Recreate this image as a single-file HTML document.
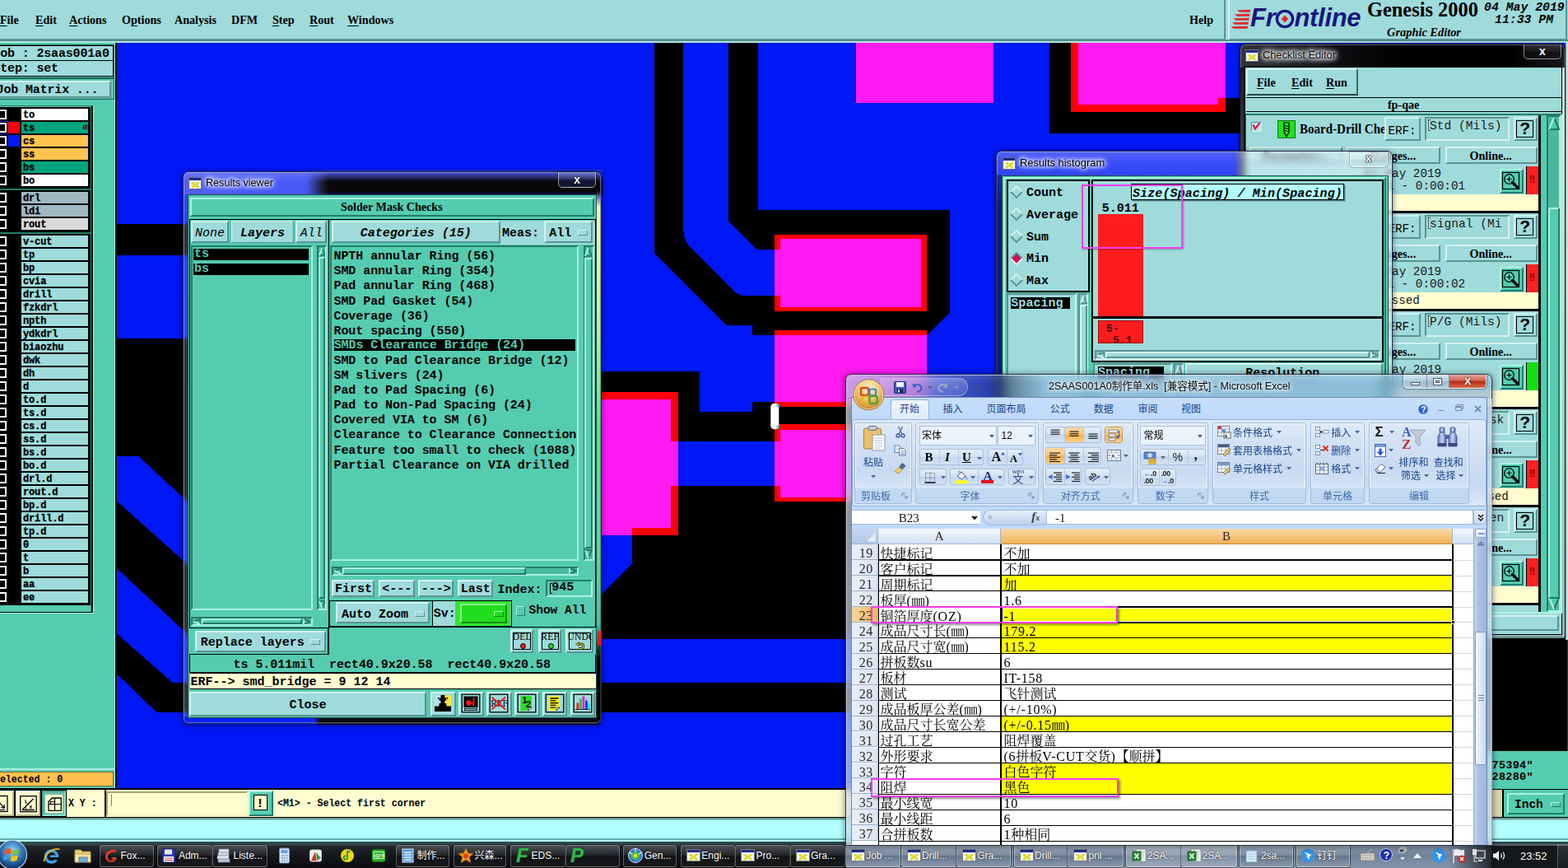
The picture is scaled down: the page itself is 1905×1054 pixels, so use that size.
<!DOCTYPE html>
<html lang="en"><head><meta charset="utf-8"><title>Genesis 2000 Graphic Editor</title>
<style>
html,body{margin:0;padding:0}
body{width:1905px;height:1054px;overflow:hidden;position:relative;background:#9fdbdb;font-family:"Liberation Sans",sans-serif}
div,span,svg{position:absolute;box-sizing:border-box}
span.i{position:static}
.m{font:bold 15px "Liberation Mono",monospace;white-space:pre;color:#000;line-height:1}
.mr{font:15px "Liberation Mono",monospace;white-space:pre;color:#000;line-height:1}
.mi{font:italic bold 15px "Liberation Mono",monospace;white-space:pre;color:#000;line-height:1}
.s{font:bold 16px "Liberation Serif",serif;white-space:pre;color:#000;line-height:1}
.a{font:12px "Liberation Sans","Noto Sans CJK SC",sans-serif;white-space:pre;color:#000;line-height:1}
.y{font:12px "Liberation Sans","Noto Sans CJK SC",sans-serif;white-space:pre;color:#15428b;line-height:1}
.c{font:16px "Liberation Serif","Noto Serif CJK SC",serif;white-space:pre;color:#000;line-height:1}
.up{border:2px solid;border-color:#d4f1f1 #5b9393 #5b9393 #d4f1f1;background:#9fdbdb}
.dn{border:2px solid;border-color:#5b9393 #d4f1f1 #d4f1f1 #5b9393;background:#9fdbdb}
.tup{border:2px solid;border-color:#aaf2e0 #237c66 #237c66 #aaf2e0;background:#55ccb0}
.tdn{border:2px solid;border-color:#237c66 #aaf2e0 #aaf2e0 #237c66;background:#55ccb0}
.sx{transform:scaleX(.91)}
.sl{transform:scaleX(.91);transform-origin:0 0}
.ctr{display:flex;align-items:center;justify-content:center}
.u{text-decoration:underline;text-underline-offset:2px;text-decoration-thickness:1px}
</style></head>
<body>
<svg style="left:0;top:0" width="1905" height="1054" viewBox="0 0 1905 1054" shape-rendering="crispEdges">
<clipPath id="cv"><rect x="141.5" y="52" width="1763" height="906"/></clipPath><g clip-path="url(#cv)">
<rect x="141" y="52" width="1764" height="906" fill="#0018f5"/><rect x="141" y="272" width="99" height="37.7" fill="#000"/><polygon points="141,410.8 728,410.8 728,450.6 700,450.6 700,620 141,620" fill="#000"/><polygon points="141,600 731,600 731,870 141,870" fill="#000"/><polygon points="141,554.2 168.4,554.2 300,676 300,750 141,607.6" fill="#0018f5"/><polygon points="141,689.4 234.6,776.4 1200,776.4 1200,829.3 210,829.3 141,768.6" fill="#0018f5"/><polygon points="141,768.6 210,829.3 1200,829.3 1200,864.7 190,864.7 141,817.3" fill="#000"/><polygon points="141,817.3 190,864.7 1200,864.7 1200,958 141,958" fill="#0018f5"/><polygon points="794.5,52 830,52 830,279 831.5,288 835,296 893,355 901,359 941,359 941,407.4 913.6,407.4 913.6,394.6 881.7,394.6 794.5,307" fill="#000"/><polygon points="884.5,52 921,52 921,254.8 1154,254.8 1154,379.5 1128,405.5 941,405.5 941,303 919,303 884.5,268.5" fill="#000"/><rect x="941" y="285" width="185" height="93" fill="#ff0000"/><rect x="947.7" y="290.4" width="171.7" height="82.8" fill="#ff19f3"/><rect x="941" y="303" width="7" height="56" fill="#ff19f3"/><polygon points="700,450.6 850,450.6 850,499.8 913.6,499.8 913.6,487.6 941,487.6 941,536 700,536" fill="#000"/><rect x="700" y="590" width="500" height="186.4" fill="#000"/><rect x="700" y="536" width="124" height="54" fill="#000"/><polygon points="700,650 768.3,650 768.3,684 724,728 700,728" fill="#0018f5"/><rect x="941" y="400.8" width="185" height="93.2" fill="#ff0000"/><rect x="941" y="407.4" width="185" height="81.0" fill="#ff19f3"/><rect x="913.6" y="494" width="286.4" height="21.4" fill="#000"/><rect x="941" y="515.4" width="185" height="93.1" fill="#ff0000"/><rect x="947.7" y="522" width="178.3" height="81.7" fill="#ff19f3"/><rect x="941" y="536" width="7" height="54" fill="#ff19f3"/><rect x="700" y="475.6" width="124" height="174.4" fill="#ff0000"/><rect x="700" y="484.8" width="115.4" height="155.9" fill="#ff19f3"/><rect x="815" y="536" width="9" height="54" fill="#ff19f3"/><rect x="700" y="640" width="68.3" height="10" fill="#ff19f3"/><rect x="1040" y="52" width="167" height="72.6" fill="#ff19f3"/><rect x="1275" y="52" width="245" height="109.5" fill="#000"/><rect x="1489" y="52" width="31" height="66.8" fill="#0018f5"/><rect x="1301" y="52" width="188" height="83.8" fill="#ff0000"/><rect x="1310" y="52" width="179" height="66.8" fill="#ff19f3"/><rect x="1310" y="118" width="170" height="9.3" fill="#ff19f3"/><rect x="1800" y="760" width="105" height="152" fill="#000"/><defs><linearGradient id="tbg" x1="0" y1="0" x2="0" y2="1"><stop offset="0" stop-color="#2030e8"/><stop offset="0.15" stop-color="#1a28c0"/><stop offset="0.42" stop-color="#000"/><stop offset="1" stop-color="#000"/></linearGradient><linearGradient id="tbh" x1="0" y1="0" x2="1" y2="0"><stop offset="0" stop-color="#0018f5"/><stop offset="1" stop-color="#0018f5" stop-opacity="0"/></linearGradient></defs><rect x="372" y="206" width="360" height="31" fill="url(#tbg)"/><rect x="370" y="206" width="24" height="31" fill="url(#tbh)"/><rect x="385" y="869" width="344" height="11" fill="#000"/></g>
<g shape-rendering="auto"><rect x="936.3" y="489.8" width="10" height="31.4" rx="4.5" fill="#fff"/><rect x="943.3" y="490.5" width="3" height="4" fill="#3fe0f0"/><rect x="943.3" y="516.5" width="3" height="4" fill="#3fe0f0"/></g>
</svg>
<div style="left:0px;top:0px;width:1905px;height:48px;background:#9fdbdb"></div>
<div style="left:0px;top:48px;width:1905px;height:2px;background:#4d8a8a"></div>
<div style="left:0px;top:50px;width:1905px;height:2px;background:#b4e6e0"></div>
<div style="left:-4px;top:-4px;width:1493px;height:53px;border:2px solid;border-color:#d4f1f1 #5b9393 #5b9393 #d4f1f1"></div>
<div style="left:1492px;top:-4px;width:411.5px;height:53px;border:2px solid;border-color:#d4f1f1 #5b9393 #5b9393 #d4f1f1"></div>
<div class="s" style="left:0px;top:15.5px;font-size:15.5px;transform:scaleX(0.91);transform-origin:0 0"><span class="i u">F</span>ile</div>
<div class="s" style="left:42.8px;top:15.5px;font-size:15.5px;transform:scaleX(0.91);transform-origin:0 0"><span class="i u">E</span>dit</div>
<div class="s" style="left:84px;top:15.5px;font-size:15.5px;transform:scaleX(0.91);transform-origin:0 0"><span class="i u">A</span>ctions</div>
<div class="s" style="left:147.5px;top:15.5px;font-size:15.5px;transform:scaleX(0.91);transform-origin:0 0">O<span class="i u">p</span>tions</div>
<div class="s" style="left:212px;top:15.5px;font-size:15.5px;transform:scaleX(0.91);transform-origin:0 0">Analysis</div>
<div class="s" style="left:281.4px;top:15.5px;font-size:15.5px;transform:scaleX(0.91);transform-origin:0 0">DFM</div>
<div class="s" style="left:331.2px;top:15.5px;font-size:15.5px;transform:scaleX(0.91);transform-origin:0 0"><span class="i u">S</span>tep</div>
<div class="s" style="left:376px;top:15.5px;font-size:15.5px;transform:scaleX(0.91);transform-origin:0 0"><span class="i u">R</span>out</div>
<div class="s" style="left:421.8px;top:15.5px;font-size:15.5px;transform:scaleX(0.91);transform-origin:0 0"><span class="i u">W</span>indows</div>
<div class="s" style="left:1444.9px;top:15.5px;font-size:15.5px;transform:scaleX(0.91);transform-origin:0 0">Help</div>
<svg style="left:1494px;top:8px" width="30" height="30" viewBox="0 0 30 30"><polygon points="9,4.3 25.0,3.7 25.0,6.7 12,6.7" fill="#e8252a"/><polygon points="6,9.3 24.2,8.7 24.2,11.7 9,11.7" fill="#e8252a"/><polygon points="4.5,14.3 23.4,13.7 23.4,16.7 7.5,16.7" fill="#e8252a"/><polygon points="3,19.3 22.6,18.7 22.6,21.7 6,21.7" fill="#e8252a"/><polygon points="1.5,24.3 21.8,23.7 21.8,26.7 4.5,26.7" fill="#e8252a"/></svg>
<div style="left:1519px;top:6px;font:italic bold 31px 'Liberation Sans',sans-serif;color:#17177f;letter-spacing:-0.3px;line-height:1;white-space:pre">Fr<span class="i" style="display:inline-block;width:23px;position:relative;color:transparent;letter-spacing:0">o<svg style="left:-2px;top:3px" width="28" height="28" viewBox="0 0 28 28"><circle cx="14" cy="14" r="9.6" fill="none" stroke="#17177f" stroke-width="3.4"/><polygon points="14,9.6 18.2,14 14,18.4 9.8,14" fill="#e8252a"/></svg></span>ntline</div>
<div class="s" style="left:1661px;top:0px;font-size:24.4px">Genesis 2000</div>
<div class="s" style="left:1685px;top:31.5px;font-size:14.4px;font-style:italic">Graphic Editor</div>
<div class="mi" style="left:1803px;top:2px;font-size:14.8px">04 May 2019</div>
<div class="mi" style="left:1816px;top:17px;font-size:14.8px">11:33 PM</div>
<div style="left:0px;top:52px;width:141px;height:906px;background:#55ccb0"></div>
<div style="left:138.5px;top:52px;width:1.7px;height:906px;background:#aaf0e0"></div>
<div style="left:140.2px;top:52px;width:1.4px;height:906px;background:#000"></div>
<div style="left:-5px;top:53.5px;width:144px;height:41.5px;border:1.5px solid #1d5d4f;background:#55ccb0"></div>
<div style="left:-5px;top:54.7px;width:142.5px;height:19.3px;border:1.5px solid #000;background:#9fdbdb;overflow:hidden"><div class="m" style="left:-4.6px;top:2px;letter-spacing:-0.17px">Job : 2saas001a0</div></div>
<div style="left:-5px;top:73px;width:142.5px;height:19.7px;border:1.5px solid #000;background:#9fdbdb;overflow:hidden"><div class="m" style="left:-4.6px;top:2px;letter-spacing:-0.17px">Step: set</div></div>
<div style="left:-5px;top:95.3px;width:144px;height:26.2px;border:1.5px solid #1d5d4f;background:#55ccb0"></div>
<div class="up" style="left:-5px;top:98.2px;width:140.4px;height:21.2px;overflow:hidden"><div class="m" style="left:-1.3px;top:2px;letter-spacing:-0.17px">Job Matrix ...</div></div>
<div style="left:-5px;top:127.5px;width:118.5px;height:617.5px;border:1.500px solid;border-color:#237c66 #aaf0e0 #aaf0e0 #237c66;background:#000"></div>
<div style="left:-5px;top:129px;width:116px;height:613.5px;background:#55ccb0"></div>
<div style="left:109.5px;top:129px;width:1.5px;height:613.5px;background:#3a9a84"></div>
<div style="left:0px;top:129.7px;width:109.5px;height:605.3px;background:#000"></div>
<div style="left:-3px;top:133px;width:11px;height:12px;background:#000;border:2px solid #fff"></div>
<div style="left:26px;top:132px;width:81.4px;height:14px;background:#fff;overflow:hidden"><div class="m" style="left:2px;top:1.5px;font-size:12px;letter-spacing:-0.15px;-webkit-text-stroke:.3px #000">to</div></div>
<div style="left:-3px;top:149px;width:11px;height:12px;background:#000;border:2px solid #fff"></div>
<div style="left:-3px;top:147px;width:12.5px;height:16px;border:1.5px solid #0018f5"></div>
<div style="left:10px;top:148px;width:14.3px;height:14px;background:#ff0000"></div>
<div style="left:26px;top:148px;width:81.4px;height:14px;background:#00a57e;overflow:hidden"><div class="m" style="left:2px;top:1.5px;font-size:12px;letter-spacing:-0.15px;-webkit-text-stroke:.3px #000">ts</div></div>
<div style="left:-3px;top:165px;width:11px;height:12px;background:#000;border:2px solid #fff"></div>
<div style="left:10px;top:164px;width:14.3px;height:14px;background:#0018f5"></div>
<div style="left:26px;top:164px;width:81.4px;height:14px;background:#ffc350;overflow:hidden"><div class="m" style="left:2px;top:1.5px;font-size:12px;letter-spacing:-0.15px;-webkit-text-stroke:.3px #000">cs</div></div>
<div style="left:-3px;top:181px;width:11px;height:12px;background:#000;border:2px solid #fff"></div>
<div style="left:26px;top:180px;width:81.4px;height:14px;background:#ffc350;overflow:hidden"><div class="m" style="left:2px;top:1.5px;font-size:12px;letter-spacing:-0.15px;-webkit-text-stroke:.3px #000">ss</div></div>
<div style="left:-3px;top:197px;width:11px;height:12px;background:#000;border:2px solid #fff"></div>
<div style="left:26px;top:196px;width:81.4px;height:14px;background:#00a57e;overflow:hidden"><div class="m" style="left:2px;top:1.5px;font-size:12px;letter-spacing:-0.15px;-webkit-text-stroke:.3px #000">bs</div></div>
<div style="left:-3px;top:213px;width:11px;height:12px;background:#000;border:2px solid #fff"></div>
<div style="left:26px;top:212px;width:81.4px;height:14px;background:#fff;overflow:hidden"><div class="m" style="left:2px;top:1.5px;font-size:12px;letter-spacing:-0.15px;-webkit-text-stroke:.3px #000">bo</div></div>
<div style="left:0px;top:228.5px;width:109.5px;height:2.0px;background:#237c66"></div>
<div style="left:-3px;top:234.2px;width:11px;height:12.0px;background:#000;border:2px solid #fff"></div>
<div style="left:26px;top:233.2px;width:81.4px;height:14.0px;background:#a0b8c2;overflow:hidden"><div class="m" style="left:2px;top:1.5px;font-size:12px;letter-spacing:-0.15px;-webkit-text-stroke:.3px #000">drl</div></div>
<div style="left:-3px;top:250.2px;width:11px;height:12.0px;background:#000;border:2px solid #fff"></div>
<div style="left:26px;top:249.2px;width:81.4px;height:14.0px;background:#a0b8c2;overflow:hidden"><div class="m" style="left:2px;top:1.5px;font-size:12px;letter-spacing:-0.15px;-webkit-text-stroke:.3px #000">ldi</div></div>
<div style="left:-3px;top:266.2px;width:11px;height:12.0px;background:#000;border:2px solid #fff"></div>
<div style="left:26px;top:265.2px;width:81.4px;height:14.0px;background:#d9d9d9;overflow:hidden"><div class="m" style="left:2px;top:1.5px;font-size:12px;letter-spacing:-0.15px;-webkit-text-stroke:.3px #000">rout</div></div>
<div style="left:0px;top:281.5px;width:109.5px;height:2.0px;background:#237c66"></div>
<div style="left:-3px;top:287.3px;width:11px;height:12.0px;background:#000;border:2px solid #fff"></div>
<div style="left:26px;top:286.3px;width:81.4px;height:14.0px;background:#9fdbdb;overflow:hidden"><div class="m" style="left:2px;top:1.5px;font-size:12px;letter-spacing:-0.15px;-webkit-text-stroke:.3px #000">v-cut</div></div>
<div style="left:-3px;top:303.3px;width:11px;height:12.0px;background:#000;border:2px solid #fff"></div>
<div style="left:26px;top:302.3px;width:81.4px;height:14.0px;background:#9fdbdb;overflow:hidden"><div class="m" style="left:2px;top:1.5px;font-size:12px;letter-spacing:-0.15px;-webkit-text-stroke:.3px #000">tp</div></div>
<div style="left:-3px;top:319.3px;width:11px;height:12.0px;background:#000;border:2px solid #fff"></div>
<div style="left:26px;top:318.3px;width:81.4px;height:14.0px;background:#9fdbdb;overflow:hidden"><div class="m" style="left:2px;top:1.5px;font-size:12px;letter-spacing:-0.15px;-webkit-text-stroke:.3px #000">bp</div></div>
<div style="left:-3px;top:335.3px;width:11px;height:12.0px;background:#000;border:2px solid #fff"></div>
<div style="left:26px;top:334.3px;width:81.4px;height:14.0px;background:#9fdbdb;overflow:hidden"><div class="m" style="left:2px;top:1.5px;font-size:12px;letter-spacing:-0.15px;-webkit-text-stroke:.3px #000">cvia</div></div>
<div style="left:-3px;top:351.3px;width:11px;height:12.0px;background:#000;border:2px solid #fff"></div>
<div style="left:26px;top:350.3px;width:81.4px;height:14.0px;background:#9fdbdb;overflow:hidden"><div class="m" style="left:2px;top:1.5px;font-size:12px;letter-spacing:-0.15px;-webkit-text-stroke:.3px #000">drill</div></div>
<div style="left:-3px;top:367.3px;width:11px;height:12.0px;background:#000;border:2px solid #fff"></div>
<div style="left:26px;top:366.3px;width:81.4px;height:14.0px;background:#9fdbdb;overflow:hidden"><div class="m" style="left:2px;top:1.5px;font-size:12px;letter-spacing:-0.15px;-webkit-text-stroke:.3px #000">fzkdrl</div></div>
<div style="left:-3px;top:383.3px;width:11px;height:12.0px;background:#000;border:2px solid #fff"></div>
<div style="left:26px;top:382.3px;width:81.4px;height:14.0px;background:#9fdbdb;overflow:hidden"><div class="m" style="left:2px;top:1.5px;font-size:12px;letter-spacing:-0.15px;-webkit-text-stroke:.3px #000">npth</div></div>
<div style="left:-3px;top:399.3px;width:11px;height:12.0px;background:#000;border:2px solid #fff"></div>
<div style="left:26px;top:398.3px;width:81.4px;height:14.0px;background:#9fdbdb;overflow:hidden"><div class="m" style="left:2px;top:1.5px;font-size:12px;letter-spacing:-0.15px;-webkit-text-stroke:.3px #000">ydkdrl</div></div>
<div style="left:-3px;top:415.3px;width:11px;height:12.0px;background:#000;border:2px solid #fff"></div>
<div style="left:26px;top:414.3px;width:81.4px;height:14.0px;background:#9fdbdb;overflow:hidden"><div class="m" style="left:2px;top:1.5px;font-size:12px;letter-spacing:-0.15px;-webkit-text-stroke:.3px #000">biaozhu</div></div>
<div style="left:-3px;top:431.3px;width:11px;height:12.0px;background:#000;border:2px solid #fff"></div>
<div style="left:26px;top:430.3px;width:81.4px;height:14.0px;background:#9fdbdb;overflow:hidden"><div class="m" style="left:2px;top:1.5px;font-size:12px;letter-spacing:-0.15px;-webkit-text-stroke:.3px #000">dwk</div></div>
<div style="left:-3px;top:447.3px;width:11px;height:12.0px;background:#000;border:2px solid #fff"></div>
<div style="left:26px;top:446.3px;width:81.4px;height:14.0px;background:#9fdbdb;overflow:hidden"><div class="m" style="left:2px;top:1.5px;font-size:12px;letter-spacing:-0.15px;-webkit-text-stroke:.3px #000">dh</div></div>
<div style="left:-3px;top:463.3px;width:11px;height:12.0px;background:#000;border:2px solid #fff"></div>
<div style="left:26px;top:462.3px;width:81.4px;height:14.0px;background:#9fdbdb;overflow:hidden"><div class="m" style="left:2px;top:1.5px;font-size:12px;letter-spacing:-0.15px;-webkit-text-stroke:.3px #000">d</div></div>
<div style="left:-3px;top:479.3px;width:11px;height:12.0px;background:#000;border:2px solid #fff"></div>
<div style="left:26px;top:478.3px;width:81.4px;height:14.0px;background:#9fdbdb;overflow:hidden"><div class="m" style="left:2px;top:1.5px;font-size:12px;letter-spacing:-0.15px;-webkit-text-stroke:.3px #000">to.d</div></div>
<div style="left:-3px;top:495.3px;width:11px;height:12.0px;background:#000;border:2px solid #fff"></div>
<div style="left:26px;top:494.3px;width:81.4px;height:14.0px;background:#9fdbdb;overflow:hidden"><div class="m" style="left:2px;top:1.5px;font-size:12px;letter-spacing:-0.15px;-webkit-text-stroke:.3px #000">ts.d</div></div>
<div style="left:-3px;top:511.3px;width:11px;height:12.0px;background:#000;border:2px solid #fff"></div>
<div style="left:26px;top:510.3px;width:81.4px;height:14.0px;background:#9fdbdb;overflow:hidden"><div class="m" style="left:2px;top:1.5px;font-size:12px;letter-spacing:-0.15px;-webkit-text-stroke:.3px #000">cs.d</div></div>
<div style="left:-3px;top:527.3px;width:11px;height:12.0px;background:#000;border:2px solid #fff"></div>
<div style="left:26px;top:526.3px;width:81.4px;height:14.0px;background:#9fdbdb;overflow:hidden"><div class="m" style="left:2px;top:1.5px;font-size:12px;letter-spacing:-0.15px;-webkit-text-stroke:.3px #000">ss.d</div></div>
<div style="left:-3px;top:543.3px;width:11px;height:12.0px;background:#000;border:2px solid #fff"></div>
<div style="left:26px;top:542.3px;width:81.4px;height:14.0px;background:#9fdbdb;overflow:hidden"><div class="m" style="left:2px;top:1.5px;font-size:12px;letter-spacing:-0.15px;-webkit-text-stroke:.3px #000">bs.d</div></div>
<div style="left:-3px;top:559.3px;width:11px;height:12.0px;background:#000;border:2px solid #fff"></div>
<div style="left:26px;top:558.3px;width:81.4px;height:14.0px;background:#9fdbdb;overflow:hidden"><div class="m" style="left:2px;top:1.5px;font-size:12px;letter-spacing:-0.15px;-webkit-text-stroke:.3px #000">bo.d</div></div>
<div style="left:-3px;top:575.3px;width:11px;height:12.0px;background:#000;border:2px solid #fff"></div>
<div style="left:26px;top:574.3px;width:81.4px;height:14.0px;background:#9fdbdb;overflow:hidden"><div class="m" style="left:2px;top:1.5px;font-size:12px;letter-spacing:-0.15px;-webkit-text-stroke:.3px #000">drl.d</div></div>
<div style="left:-3px;top:591.3px;width:11px;height:12.0px;background:#000;border:2px solid #fff"></div>
<div style="left:26px;top:590.3px;width:81.4px;height:14.0px;background:#9fdbdb;overflow:hidden"><div class="m" style="left:2px;top:1.5px;font-size:12px;letter-spacing:-0.15px;-webkit-text-stroke:.3px #000">rout.d</div></div>
<div style="left:-3px;top:607.3px;width:11px;height:12.0px;background:#000;border:2px solid #fff"></div>
<div style="left:26px;top:606.3px;width:81.4px;height:14.0px;background:#9fdbdb;overflow:hidden"><div class="m" style="left:2px;top:1.5px;font-size:12px;letter-spacing:-0.15px;-webkit-text-stroke:.3px #000">bp.d</div></div>
<div style="left:-3px;top:623.3px;width:11px;height:12.0px;background:#000;border:2px solid #fff"></div>
<div style="left:26px;top:622.3px;width:81.4px;height:14.0px;background:#9fdbdb;overflow:hidden"><div class="m" style="left:2px;top:1.5px;font-size:12px;letter-spacing:-0.15px;-webkit-text-stroke:.3px #000">drill.d</div></div>
<div style="left:-3px;top:639.3px;width:11px;height:12.0px;background:#000;border:2px solid #fff"></div>
<div style="left:26px;top:638.3px;width:81.4px;height:14.0px;background:#9fdbdb;overflow:hidden"><div class="m" style="left:2px;top:1.5px;font-size:12px;letter-spacing:-0.15px;-webkit-text-stroke:.3px #000">tp.d</div></div>
<div style="left:-3px;top:655.3px;width:11px;height:12.0px;background:#000;border:2px solid #fff"></div>
<div style="left:26px;top:654.3px;width:81.4px;height:14.0px;background:#9fdbdb;overflow:hidden"><div class="m" style="left:2px;top:1.5px;font-size:12px;letter-spacing:-0.15px;-webkit-text-stroke:.3px #000">0</div></div>
<div style="left:-3px;top:671.3px;width:11px;height:12.0px;background:#000;border:2px solid #fff"></div>
<div style="left:26px;top:670.3px;width:81.4px;height:14.0px;background:#9fdbdb;overflow:hidden"><div class="m" style="left:2px;top:1.5px;font-size:12px;letter-spacing:-0.15px;-webkit-text-stroke:.3px #000">t</div></div>
<div style="left:-3px;top:687.3px;width:11px;height:12.0px;background:#000;border:2px solid #fff"></div>
<div style="left:26px;top:686.3px;width:81.4px;height:14.0px;background:#9fdbdb;overflow:hidden"><div class="m" style="left:2px;top:1.5px;font-size:12px;letter-spacing:-0.15px;-webkit-text-stroke:.3px #000">b</div></div>
<div style="left:-3px;top:703.3px;width:11px;height:12.0px;background:#000;border:2px solid #fff"></div>
<div style="left:26px;top:702.3px;width:81.4px;height:14.0px;background:#9fdbdb;overflow:hidden"><div class="m" style="left:2px;top:1.5px;font-size:12px;letter-spacing:-0.15px;-webkit-text-stroke:.3px #000">aa</div></div>
<div style="left:-3px;top:719.3px;width:11px;height:12.0px;background:#000;border:2px solid #fff"></div>
<div style="left:26px;top:718.3px;width:81.4px;height:14.0px;background:#9fdbdb;overflow:hidden"><div class="m" style="left:2px;top:1.5px;font-size:12px;letter-spacing:-0.15px;-webkit-text-stroke:.3px #000">ee</div></div>
<div style="left:101px;top:152.3px;width:4.6px;height:4.7px;border:1px solid #000;background:#fff"><div style="left:0;top:1px;width:3px;height:1px;background:#000"></div><div style="left:1px;top:0;width:1px;height:3px;background:#000"></div></div>
<div style="left:-5px;top:933px;width:143.5px;height:24px;border-top:2px solid #aaf0e0;background:#55ccb0"></div>
<div style="left:-5px;top:937px;width:143px;height:18px;background:#ffc04c;border:1px solid #7a6a30;overflow:hidden"><div class="m" style="left:-3.4px;top:1.5px;font-size:13.4px;transform:scaleX(.863);transform-origin:0 0">Selected : 0</div></div>
<div style="left:0px;top:957px;width:1905px;height:2px;background:#000"></div>
<div style="left:0px;top:959px;width:1905px;height:33px;background:#fffccf"></div>
<div style="left:0px;top:991.5px;width:1905px;height:1.5px;background:#000"></div>
<div style="left:0px;top:993px;width:1905px;height:1.5px;background:#6a9c9c"></div>
<div style="left:0px;top:994.5px;width:1905px;height:1.5px;background:#8fd0c8"></div>
<div style="left:0px;top:996px;width:1905px;height:22px;background:#b2ffff"></div>
<div style="left:0px;top:1018px;width:1905px;height:2px;background:#5fb0a8"></div>
<div style="left:0px;top:1020px;width:1905px;height:2px;background:#b2ffff"></div>
<div style="left:0px;top:1022px;width:1905px;height:3px;background:#2a4a48"></div>
<div style="left:0px;top:959px;width:128.5px;height:33px;background:#000"></div>
<div style="left:-4px;top:960px;width:21px;height:31px;border:2px solid;border-color:#ffffee #b8b68a #b8b68a #ffffee;background:#fffccf;overflow:hidden"><svg style="left:-3px;top:3px" width="22" height="24" viewBox="0 0 22 24"><rect x="-2" y="1.500" width="16" height="19" fill="none" stroke="#000" stroke-width="1.300"/><path d="M1 6 L10 16 M10.500 16.500 L6 15.500 M10.500 16.500 L10 12 M0 18.500h11" stroke="#000" stroke-width="1.200" fill="none"/></svg></div>
<div style="left:19px;top:960px;width:30px;height:31px;border:2px solid;border-color:#ffffee #b8b68a #b8b68a #ffffee;background:#fffccf;overflow:hidden"><svg style="left:3px;top:3.500px" width="22" height="22" viewBox="0 0 22 22"><rect x="0.700" y="0.700" width="19.500" height="19" fill="none" stroke="#000" stroke-width="1.300"/><path d="M3 17.500 L16.500 4 M3 17.500 L18 17.500" stroke="#000" stroke-width="1.400" fill="none"/><path d="M7 5v4h2.500" stroke="#000" stroke-width="1" fill="none"/><path d="M8 17.500a6 6 0 0 0-1-3.500" stroke="#000" fill="none" stroke-width=".9"/><text x="11.500" y="16" font-size="6.500" font-weight="bold" font-family="Liberation Sans">x</text></svg></div>
<div style="left:51px;top:960px;width:28.5px;height:31px;background:#6dbfad;border:2px solid;border-color:#4fa391 #8fdccb #8fdccb #4fa391"><div style="left:2px;top:2.500px;width:20.500px;height:22px;background:#fffccf"><svg style="left:2.500px;top:3px" width="18" height="18" viewBox="0 0 18 18"><path d="M1 5.500L5.500 1H16.300V16.300H1z" fill="none" stroke="#000" stroke-width="1.300"/><path d="M8.500 1v15.300M1 8.500h15.300M3.500 8.500V5.500h5" stroke="#000" stroke-width="1.200" fill="none"/></svg></div></div>
<div style="left:80.5px;top:959px;width:46.5px;height:33px;background:#fffccf"></div>
<div class="m" style="left:83px;top:968.5px;font-size:13.4px;transform:scaleX(.863);transform-origin:0 0">X Y :</div>
<div style="left:127px;top:959px;width:1.5px;height:33px;background:#000"></div>
<div style="left:128.5px;top:961px;width:172.0px;height:29.5px;border:2.5px solid;border-color:#a8a578 #f6f3c0 #f6f3c0 #a8a578;background:#fffccf"><div style="left:4px;top:2px;width:1px;height:13px;border-left:1px dotted #000"></div></div>
<div style="left:302px;top:960px;width:29.5px;height:31px;border:2.5px solid;border-color:#aaf2e0 #237c66 #237c66 #aaf2e0;background:#55ccb0"><div style="left:3.5px;top:3px;width:17px;height:19px;border:1.3px solid #000;background:#fffacd" class="ctr"><b style="font:bold 15px 'Liberation Sans',sans-serif">!</b></div></div>
<div class="m" style="left:337px;top:969px;font-size:13.4px;transform:scaleX(.863);transform-origin:0 0">&lt;M1&gt; - Select first corner</div>
<div style="left:1795px;top:912px;width:110px;height:45.5px;background:#55ccb0"></div>
<div class="m" style="left:1812.5px;top:922.5px;font-size:13.5px;letter-spacing:0.3px">75394"</div>
<div class="m" style="left:1812.5px;top:937px;font-size:13.5px;letter-spacing:0.3px">28280"</div>
<div style="left:1795px;top:959px;width:30px;height:33px;background:#d8d4a8"></div>
<div style="left:1825px;top:959px;width:80px;height:33px;background:#55ccb0;border-left:2px solid #000"></div>
<div class="tup" style="left:1831px;top:963px;width:70px;height:26px;"><div class="m" style="left:7px;top:4.5px;font-size:14.5px">Inch</div><div style="left:51px;top:9px;width:12px;height:6px;border:1.5px solid;border-color:#aaf2e0 #237c66 #237c66 #aaf2e0"></div></div>
<div style="left:0px;top:1025px;width:1905px;height:29px;background:linear-gradient(#4a5058 0%,#23272d 8%,#14171b 50%,#0b0c0f 100%)"></div>
<div style="left:1028px;top:1025px;width:784px;height:29px;background:linear-gradient(#a9b7c9 0%,#8798ae 12%,#71839b 50%,#8495ab 100%)"></div>
<div style="left:1760px;top:1025px;width:145px;height:29px;background:linear-gradient(90deg,#14171b00,#14171bd0 50px,#14171b 58px)"></div>
<div style="left:1812px;top:1025px;width:93px;height:2px;background:#5a6068"></div>
<svg style="left:-6px;top:1016px" width="44" height="40" viewBox="0 0 44 40"><defs><radialGradient id="orb" cx="50%" cy="35%" r="65%"><stop offset="0" stop-color="#9fd4f5"/><stop offset="0.55" stop-color="#2f74b8"/><stop offset="1" stop-color="#0c2c5c"/></radialGradient></defs><circle cx="21" cy="22" r="17.5" fill="url(#orb)" stroke="#b8d4ea" stroke-width="1.2"/><path d="M12 16 q4-2.5 8-0.5 l-1.2 6 q-4-2-8 .5z" fill="#e8572a"/><path d="M21.5 15.8 q4 1.5 8-1 l-1.3 6.2 q-4 2.4-8 .8z" fill="#7fc241"/><path d="M10.5 23.5 q4-2.5 8-0.5 l-1.2 6 q-4-2-8 .5z" fill="#3a9ad9"/><path d="M19.8 23.2 q4 1.5 8-1 l-1.3 6.2 q-4 2.4-8 .8z" fill="#f9c513"/></svg>
<svg style="left:52px;top:1027px" width="22" height="24" viewBox="0 0 22 24"><circle cx="10.5" cy="13" r="7" fill="none" stroke="#3aa0ea" stroke-width="3.4"/><rect x="9" y="11.5" width="10" height="2.6" fill="#3aa0ea"/><rect x="13" y="14" width="7" height="3.2" fill="#14171b"/><path d="M1.5 19 C3 8 14 2 20.5 4.5" stroke="#f2b81e" stroke-width="1.8" fill="none"/></svg>
<svg style="left:90px;top:1028px" width="22" height="22" viewBox="0 0 22 22"><path d="M1 4h7l2 2h10v13H1z" fill="#e9cf78" stroke="#a88c30" stroke-width=".8"/><path d="M1 9h19v10H1z" fill="#f6e49c" stroke="#b49a3c" stroke-width=".8"/><rect x="6" y="13" width="10" height="6" fill="#6fb1e0" stroke="#3573a8" stroke-width=".8"/></svg>
<div style="left:121px;top:1025.5px;width:65.7px;height:27.5px;border:1px solid #ffffff50;border-radius:3px;background:linear-gradient(#ffffff2e,#ffffff10 45%,#00000018 50%,#ffffff0c);box-shadow:0 0 0 1px #00000080"></div>
<svg style="left:126px;top:1030px" width="18" height="18" viewBox="0 0 18 18"><path d="M14.5 2 C7 1 2 5 2 10 c0 4 3 7 7 7 c4 0 6.5-2.5 6.500-6 h-6 v2.500 h2.500 c-.5 1-1.500 1.500-3 1.500 c-2.500 0-4-2-4-4.500 c0-4 4-6.500 9.500-5.500z" fill="#e33a22"/></svg>
<div class="a" style="left:146.5px;top:1033px;font-size:12px;color:#fff;text-shadow:0 0 2px #000">Fox...</div>
<div style="left:191.4px;top:1025.5px;width:66.6px;height:27.5px;border:1px solid #ffffff50;border-radius:3px;background:linear-gradient(#ffffff2e,#ffffff10 45%,#00000018 50%,#ffffff0c);box-shadow:0 0 0 1px #00000080"></div>
<svg style="left:196px;top:1030px" width="18" height="18" viewBox="0 0 18 18"><rect x="1" y="1" width="16" height="16" rx="1.5" fill="#2e3cb0" stroke="#10186a"/><rect x="4" y="1.500" width="9" height="6" fill="#e8e8f4"/><rect x="3" y="10" width="12" height="6.500" fill="#fff"/><path d="M4 12h10M4 14.500h10" stroke="#d03030" stroke-width="1.200"/></svg>
<div class="a" style="left:216.9px;top:1033px;font-size:12px;color:#fff;text-shadow:0 0 2px #000">Adm...</div>
<div style="left:258px;top:1025.5px;width:66.5px;height:27.5px;border:1px solid #ffffff50;border-radius:3px;background:linear-gradient(#ffffff2e,#ffffff10 45%,#00000018 50%,#ffffff0c);box-shadow:0 0 0 1px #00000080"></div>
<svg style="left:263px;top:1030px" width="18" height="18" viewBox="0 0 18 18"><rect x="3" y="1" width="12" height="4" fill="#dfe6ee" stroke="#8492a6" stroke-width=".6"/><rect x="2" y="5" width="13" height="4" fill="#cfd8e4" stroke="#8492a6" stroke-width=".6"/><rect x="1" y="9" width="14" height="4" fill="#dfe6ee" stroke="#8492a6" stroke-width=".6"/><rect x="2" y="13" width="14" height="4" fill="#b8c4d4" stroke="#8492a6" stroke-width=".6"/></svg>
<div class="a" style="left:283.5px;top:1033px;font-size:12px;color:#fff;text-shadow:0 0 2px #000">Liste...</div>
<svg style="left:338px;top:1029px" width="16" height="20" viewBox="0 0 16 20"><rect x="1.500" y="1" width="12" height="18" rx="1.500" fill="#d4e4f8" stroke="#6d8fc0"/><rect x="3.500" y="3" width="8" height="4" fill="#6fa0dc"/><path d="M4 10h2M7 10h2M10 10h1.500M4 13h2M7 13h2M10 13h1.500M4 16h2M7 16h2M10 16h1.500" stroke="#7c96b8" stroke-width="1.500"/></svg>
<svg style="left:375px;top:1030px" width="18" height="18" viewBox="0 0 18 18"><rect x="1.500" y="2" width="14" height="14" rx="2" fill="#f2f2ee" stroke="#c9c9c0"/><path d="M3 15 L8 4 L9.500 15z" fill="#d8321e"/><path d="M9 5 L15 12 L10 15z" fill="#2f9a48"/></svg>
<svg style="left:413px;top:1030px" width="18" height="18" viewBox="0 0 18 18"><circle cx="9" cy="9" r="8" fill="#f2d41c"/><path d="M9 3 v8.500 a2.200 2.200 0 1 1 -1.500 -2.100" stroke="#1f9a48" stroke-width="1.800" fill="none"/><path d="M9 3 l3.500 1.800" stroke="#1f9a48" stroke-width="1.800"/></svg>
<svg style="left:451px;top:1030px" width="18" height="18" viewBox="0 0 18 18"><rect x="1" y="1.500" width="16" height="15" rx="2.500" fill="#27b020"/><rect x="3" y="4.500" width="12" height="8" fill="none" stroke="#d8ffd0" stroke-width=".9"/><text x="3.800" y="11.300" font-size="5.500" font-family="Liberation Sans" font-weight="bold" fill="#eaffea">iQIYI</text></svg>
<div style="left:481px;top:1025.5px;width:65px;height:27.5px;border:1px solid #ffffff50;border-radius:3px;background:linear-gradient(#ffffff2e,#ffffff10 45%,#00000018 50%,#ffffff0c);box-shadow:0 0 0 1px #00000080"></div>
<svg style="left:488px;top:1030px" width="16" height="18" viewBox="0 0 16 18"><rect x="1" y="1" width="13" height="16" fill="#4f97e6" stroke="#dbe9fa"/><path d="M3 5h9M3 8h9M3 11h9M3 14h9" stroke="#eaf3ff" stroke-width="1.400"/></svg>
<div class="a" style="left:506.5px;top:1033px;font-size:12px;color:#fff;text-shadow:0 0 2px #000">制作...</div>
<div style="left:551px;top:1025.5px;width:64px;height:27.5px;border:1px solid #ffffff50;border-radius:3px;background:linear-gradient(#ffffff2e,#ffffff10 45%,#00000018 50%,#ffffff0c);box-shadow:0 0 0 1px #00000080"></div>
<svg style="left:556px;top:1029px" width="20" height="20" viewBox="0 0 20 20"><polygon points="10,1 12.600,7 19,7.500 14.200,11.800 15.800,18.500 10,15 4.200,18.500 5.800,11.800 1,7.500 7.400,7" fill="#e8a01c" stroke="#b86c10" stroke-width=".8"/><circle cx="10" cy="10.500" r="3" fill="#e83c1c"/></svg>
<div class="a" style="left:576.5px;top:1033px;font-size:12px;color:#fff;text-shadow:0 0 2px #000">兴森...</div>
<div style="left:620px;top:1025.5px;width:66.7px;height:27.5px;border:1px solid #ffffff50;border-radius:3px;background:linear-gradient(#ffffff2e,#ffffff10 45%,#00000018 50%,#ffffff0c);box-shadow:0 0 0 1px #00000080"></div>
<div style="left:627px;top:1027px;font:italic bold 24px 'Liberation Sans',sans-serif;color:#2fb84c;line-height:1;text-shadow:0 0 1px #0a4a18">F</div>
<div class="a" style="left:645.5px;top:1033px;font-size:12px;color:#fff;text-shadow:0 0 2px #000">EDS...</div>
<div style="left:686.7px;top:1025.5px;width:66.2px;height:27.5px;border:1px solid #ffffff50;border-radius:3px;background:linear-gradient(#ffffff2e,#ffffff10 45%,#00000018 50%,#ffffff0c);box-shadow:0 0 0 1px #00000080"></div>
<div style="left:693px;top:1027px;font:italic bold 24px 'Liberation Sans',sans-serif;color:#2fb84c;line-height:1;text-shadow:0 0 1px #0a4a18">P</div>
<div class="a" style="left:712.2px;top:1033px;font-size:12px;color:#fff;text-shadow:0 0 2px #000"></div>
<div style="left:757.2px;top:1025.5px;width:64.5px;height:27.5px;border:1px solid #ffffff50;border-radius:3px;background:linear-gradient(#ffffff2e,#ffffff10 45%,#00000018 50%,#ffffff0c);box-shadow:0 0 0 1px #00000080"></div>
<svg style="left:762px;top:1029px" width="20" height="20" viewBox="0 0 20 20"><circle cx="10" cy="10" r="8.500" fill="#2f7fd0" stroke="#cfe2f6"/><circle cx="10" cy="10" r="5" fill="#48c040"/><circle cx="10" cy="10" r="2.200" fill="#f4e030"/><path d="M2 6l4 2M18 6l-4 2M10 1v4" stroke="#f0f6ff" stroke-width="1.200"/></svg>
<div class="a" style="left:782.7px;top:1033px;font-size:12px;color:#fff;text-shadow:0 0 2px #000">Gen...</div>
<div style="left:826.8px;top:1025.5px;width:66.2px;height:27.5px;border:1px solid #ffffff50;border-radius:3px;background:linear-gradient(#ffffff2e,#ffffff10 45%,#00000018 50%,#ffffff0c);box-shadow:0 0 0 1px #00000080"></div>
<svg style="left:833.8px;top:1031px" width="18" height="16" viewBox="0 0 18 16"><rect x="0.5" y="0.5" width="16" height="14" fill="#f4f4ee" stroke="#7a7a7a"/><rect x="1" y="1" width="15" height="3" fill="#1f2a8a"/><path d="M4 6.5 L13 13 M13 6.5 L4 13" stroke="#c8c800" stroke-width="2.2"/><path d="M4 6.5 L13 13 M13 6.5 L4 13" stroke="#f2f23a" stroke-width="1"/></svg>
<div class="a" style="left:852.3px;top:1033px;font-size:12px;color:#fff;text-shadow:0 0 2px #000">Engi...</div>
<div style="left:893px;top:1025.5px;width:66.5px;height:27.5px;border:1px solid #ffffff50;border-radius:3px;background:linear-gradient(#ffffff2e,#ffffff10 45%,#00000018 50%,#ffffff0c);box-shadow:0 0 0 1px #00000080"></div>
<svg style="left:900px;top:1031px" width="18" height="16" viewBox="0 0 18 16"><rect x="0.5" y="0.5" width="16" height="14" fill="#f4f4ee" stroke="#7a7a7a"/><rect x="1" y="1" width="15" height="3" fill="#1f2a8a"/><path d="M4 6.5 L13 13 M13 6.5 L4 13" stroke="#c8c800" stroke-width="2.2"/><path d="M4 6.5 L13 13 M13 6.5 L4 13" stroke="#f2f23a" stroke-width="1"/></svg>
<div class="a" style="left:918.5px;top:1033px;font-size:12px;color:#fff;text-shadow:0 0 2px #000">Pro...</div>
<div style="left:959.5px;top:1025.5px;width:67.2px;height:27.5px;border:1px solid #ffffff50;border-radius:3px;background:linear-gradient(#ffffff2e,#ffffff10 45%,#00000018 50%,#ffffff0c);box-shadow:0 0 0 1px #00000080"></div>
<svg style="left:966.5px;top:1031px" width="18" height="16" viewBox="0 0 18 16"><rect x="0.5" y="0.5" width="16" height="14" fill="#f4f4ee" stroke="#7a7a7a"/><rect x="1" y="1" width="15" height="3" fill="#1f2a8a"/><path d="M4 6.5 L13 13 M13 6.5 L4 13" stroke="#c8c800" stroke-width="2.2"/><path d="M4 6.5 L13 13 M13 6.5 L4 13" stroke="#f2f23a" stroke-width="1"/></svg>
<div class="a" style="left:985.0px;top:1033px;font-size:12px;color:#fff;text-shadow:0 0 2px #000">Gra...</div>
<div style="left:1026.7px;top:1025.5px;width:67.8px;height:27.5px;border:1px solid #ffffff70;border-radius:3px;background:linear-gradient(#ffffff2e,#ffffff10 45%,#00000018 50%,#ffffff0c);box-shadow:0 0 0 1px #00000080"></div>
<svg style="left:1033.7px;top:1031px" width="18" height="16" viewBox="0 0 18 16"><rect x="0.5" y="0.5" width="16" height="14" fill="#f4f4ee" stroke="#7a7a7a"/><rect x="1" y="1" width="15" height="3" fill="#1f2a8a"/><path d="M4 6.5 L13 13 M13 6.5 L4 13" stroke="#c8c800" stroke-width="2.2"/><path d="M4 6.5 L13 13 M13 6.5 L4 13" stroke="#f2f23a" stroke-width="1"/></svg>
<div class="a" style="left:1052.2px;top:1033px;font-size:12px;color:#fff;text-shadow:0 0 2px #000">Job ...</div>
<div style="left:1094.5px;top:1025.5px;width:67.2px;height:27.5px;border:1px solid #ffffff70;border-radius:3px;background:linear-gradient(#ffffff2e,#ffffff10 45%,#00000018 50%,#ffffff0c);box-shadow:0 0 0 1px #00000080"></div>
<svg style="left:1101.5px;top:1031px" width="18" height="16" viewBox="0 0 18 16"><rect x="0.5" y="0.5" width="16" height="14" fill="#f4f4ee" stroke="#7a7a7a"/><rect x="1" y="1" width="15" height="3" fill="#1f2a8a"/><path d="M4 6.5 L13 13 M13 6.5 L4 13" stroke="#c8c800" stroke-width="2.2"/><path d="M4 6.5 L13 13 M13 6.5 L4 13" stroke="#f2f23a" stroke-width="1"/></svg>
<div class="a" style="left:1120.0px;top:1033px;font-size:12px;color:#fff;text-shadow:0 0 2px #000">Drill...</div>
<div style="left:1161.7px;top:1025.5px;width:66.3px;height:27.5px;border:1px solid #ffffff70;border-radius:3px;background:linear-gradient(#ffffff2e,#ffffff10 45%,#00000018 50%,#ffffff0c);box-shadow:0 0 0 1px #00000080"></div>
<svg style="left:1168.7px;top:1031px" width="18" height="16" viewBox="0 0 18 16"><rect x="0.5" y="0.5" width="16" height="14" fill="#f4f4ee" stroke="#7a7a7a"/><rect x="1" y="1" width="15" height="3" fill="#1f2a8a"/><path d="M4 6.5 L13 13 M13 6.5 L4 13" stroke="#c8c800" stroke-width="2.2"/><path d="M4 6.5 L13 13 M13 6.5 L4 13" stroke="#f2f23a" stroke-width="1"/></svg>
<div class="a" style="left:1187.2px;top:1033px;font-size:12px;color:#fff;text-shadow:0 0 2px #000">Gra...</div>
<div style="left:1231.5px;top:1025.5px;width:65.5px;height:27.5px;border:1px solid #ffffff70;border-radius:3px;background:linear-gradient(#ffffff2e,#ffffff10 45%,#00000018 50%,#ffffff0c);box-shadow:0 0 0 1px #00000080"></div>
<svg style="left:1238.5px;top:1031px" width="18" height="16" viewBox="0 0 18 16"><rect x="0.5" y="0.5" width="16" height="14" fill="#f4f4ee" stroke="#7a7a7a"/><rect x="1" y="1" width="15" height="3" fill="#1f2a8a"/><path d="M4 6.5 L13 13 M13 6.5 L4 13" stroke="#c8c800" stroke-width="2.2"/><path d="M4 6.5 L13 13 M13 6.5 L4 13" stroke="#f2f23a" stroke-width="1"/></svg>
<div class="a" style="left:1257.0px;top:1033px;font-size:12px;color:#fff;text-shadow:0 0 2px #000">Drill...</div>
<div style="left:1297px;top:1025.5px;width:67.7px;height:27.5px;border:1px solid #ffffff70;border-radius:3px;background:linear-gradient(#ffffff2e,#ffffff10 45%,#00000018 50%,#ffffff0c);box-shadow:0 0 0 1px #00000080"></div>
<svg style="left:1304px;top:1031px" width="18" height="16" viewBox="0 0 18 16"><rect x="0.5" y="0.5" width="16" height="14" fill="#f4f4ee" stroke="#7a7a7a"/><rect x="1" y="1" width="15" height="3" fill="#1f2a8a"/><path d="M4 6.5 L13 13 M13 6.5 L4 13" stroke="#c8c800" stroke-width="2.2"/><path d="M4 6.5 L13 13 M13 6.5 L4 13" stroke="#f2f23a" stroke-width="1"/></svg>
<div class="a" style="left:1322.5px;top:1033px;font-size:12px;color:#fff;text-shadow:0 0 2px #000">pnl ...</div>
<div style="left:1368.4px;top:1025.5px;width:66.6px;height:27.5px;border:1px solid #ffffff70;border-radius:3px;background:linear-gradient(#ffffff66,#ffffff3a 45%,#ffffff22 50%,#ffffff30);box-shadow:0 0 0 1px #00000080"></div>
<svg style="left:1375px;top:1030px" width="18" height="18" viewBox="0 0 18 18"><rect x="5" y="1" width="12" height="15" fill="#f4f8f4" stroke="#8aa08a" stroke-width=".8"/><path d="M7 5h8M7 8h8M7 11h8" stroke="#9ab89a"/><rect x="1" y="4" width="10" height="11" fill="#2a8a3c" stroke="#145a20" stroke-width=".8"/><path d="M3.500 6.500l5 6M8.500 6.500l-5 6" stroke="#fff" stroke-width="1.500"/></svg>
<div class="a" style="left:1393.9px;top:1033px;font-size:12px;color:#fff;text-shadow:0 0 2px #000">2SA...</div>
<div style="left:1435px;top:1025.5px;width:67.7px;height:27.5px;border:1px solid #ffffff70;border-radius:3px;background:linear-gradient(#ffffff66,#ffffff3a 45%,#ffffff22 50%,#ffffff30);box-shadow:0 0 0 1px #00000080"></div>
<svg style="left:1442px;top:1030px" width="18" height="18" viewBox="0 0 18 18"><rect x="5" y="1" width="12" height="15" fill="#f4f8f4" stroke="#8aa08a" stroke-width=".8"/><path d="M7 5h8M7 8h8M7 11h8" stroke="#9ab89a"/><rect x="1" y="4" width="10" height="11" fill="#2a8a3c" stroke="#145a20" stroke-width=".8"/><path d="M3.500 6.500l5 6M8.500 6.500l-5 6" stroke="#fff" stroke-width="1.500"/></svg>
<div class="a" style="left:1460.5px;top:1033px;font-size:12px;color:#fff;text-shadow:0 0 2px #000">2SA...</div>
<div style="left:1506.4px;top:1025.5px;width:64.8px;height:27.5px;border:1px solid #ffffff70;border-radius:3px;background:linear-gradient(#ffffff2e,#ffffff10 45%,#00000018 50%,#ffffff0c);box-shadow:0 0 0 1px #00000080"></div>
<svg style="left:1513px;top:1030px" width="16" height="18" viewBox="0 0 16 18"><rect x="1" y="2" width="13" height="15" fill="#d4ecf8" stroke="#6f9ab8" stroke-width=".8"/><path d="M3 1v3M6 1v3M9 1v3M12 1v3" stroke="#6f8aa0"/><path d="M3 7h9M3 10h9M3 13h9" stroke="#9cc0d8" stroke-width=".8"/></svg>
<div class="a" style="left:1531.9px;top:1033px;font-size:12px;color:#fff;text-shadow:0 0 2px #000">2sa...</div>
<div style="left:1574.5px;top:1025.5px;width:65.9px;height:27.5px;border:1px solid #ffffff70;border-radius:3px;background:linear-gradient(#ffffff2e,#ffffff10 45%,#00000018 50%,#ffffff0c);box-shadow:0 0 0 1px #00000080"></div>
<svg style="left:1580px;top:1030px" width="18" height="18" viewBox="0 0 18 18"><circle cx="9" cy="9" r="8.500" fill="#2f94ea"/><path d="M4.500 4.500 l9 3.500 l-3 2 l1 1 l-2.500 3.500 l.3-3 l-2.500-1.500 l2-.7z" fill="#fff"/></svg>
<div class="a" style="left:1600.0px;top:1033px;font-size:12px;color:#fff;text-shadow:0 0 2px #000">钉钉</div>
<svg style="left:1652px;top:1031px" width="20" height="16" viewBox="0 0 20 16"><rect x="1" y="5" width="17" height="9" rx="1" fill="#d8d4cc" stroke="#8a857a"/><path d="M3 8h13M3 11h13" stroke="#8a857a" stroke-dasharray="2 1"/><path d="M10 5 q0-4 5-4" stroke="#c8c4bc" fill="none"/></svg>
<svg style="left:1676px;top:1030px" width="16" height="16" viewBox="0 0 16 16"><circle cx="8" cy="8" r="7.500" fill="#1c2fb0" stroke="#c8d4f4"/><text x="4.800" y="12.500" font-size="12" font-weight="bold" font-family="Liberation Sans" fill="#fff">?</text></svg>
<svg style="left:1699px;top:1028px" width="12" height="20" viewBox="0 0 12 20"><rect x="3" y="1" width="6" height="4" fill="none" stroke="#e8e8e8"/><rect x="1" y="3" width="6" height="4" fill="#3a4048" stroke="#e8e8e8"/><polygon points="2,13 8,13 5,16.500" fill="#e8e8e8"/></svg>
<svg style="left:1716px;top:1035px" width="12" height="8" viewBox="0 0 12 8"><polygon points="6,1 11,7 1,7" fill="#f0f0f0"/></svg>
<svg style="left:1739px;top:1030px" width="18" height="18" viewBox="0 0 18 18"><circle cx="9" cy="9" r="8.500" fill="#2f94ea"/><path d="M4.500 4.500 l9 3.500 l-3 2 l1 1 l-2.500 3.500 l.3-3 l-2.500-1.500 l2-.7z" fill="#fff"/></svg>
<svg style="left:1764px;top:1029px" width="18" height="20" viewBox="0 0 18 20"><path d="M2 2v17" stroke="#e8e8e8" stroke-width="1.500"/><path d="M3 2.500 q3-1.500 6 0 t6 0 v8 q-3 1.500-6 0 t-6 0z" fill="#f4f4f4"/><circle cx="12" cy="14" r="4.500" fill="#d8281c"/><path d="M10 12l4 4M14 12l-4 4" stroke="#fff" stroke-width="1.400"/></svg>
<svg style="left:1788px;top:1030px" width="18" height="18" viewBox="0 0 18 18"><rect x="5" y="3" width="11" height="9" fill="#3a4450" stroke="#e8e8e8" stroke-width="1.200"/><rect x="8" y="14" width="5" height="2" fill="#e8e8e8"/><rect x="1" y="1" width="5" height="7" fill="#e8e8e8"/><path d="M3 8v8h4" stroke="#e8e8e8" fill="none"/></svg>
<svg style="left:1813px;top:1030px" width="18" height="18" viewBox="0 0 18 18"><polygon points="1,6.500 4,6.500 8,3 8,15 4,11.500 1,11.500" fill="#f0f0f0"/><path d="M10.500 6.500 q2 2.500 0 5 M12.800 4.500 q3.500 4.500 0 9" stroke="#f0f0f0" fill="none" stroke-width="1.200"/></svg>
<div class="a" style="left:1847px;top:1032.5px;font-size:13px;color:#fff">23:52</div>
<div style="left:1892px;top:1025px;width:13px;height:29px;border-left:1px solid #ffffff40;background:linear-gradient(#ffffff20,#ffffff05)"></div>
<div style="left:1506.4px;top:53.4px;width:395.6px;height:722.6px;border-radius:7px 7px 6px 6px;border:1px solid #101018;box-shadow:0 0 0 1px #ffffff50 inset,0 1px 5px 1px #00000066;background:linear-gradient(90deg,#30343c 0,#0c0d10 120px,#000 200px,#000 330px,#181a20 100%)"></div>
<div style="left:1507.4px;top:82px;width:4.6px;height:693px;background:linear-gradient(#1a1c22,#586870 30%,#8ab8b0 60%,#7fa8a8)"></div>
<div style="left:1897.5px;top:82px;width:3.5px;height:693px;background:linear-gradient(#d8e8e0,#a8d8c8 50%,#90b8b0)"></div>
<div style="left:1507.4px;top:770.5px;width:393.6px;height:4.5px;background:linear-gradient(#a8c8c8,#587878)"></div>
<div style="left:1902px;top:52px;width:3px;height:725px;background:linear-gradient(90deg,#90a8a8,#e8f4f4)"></div>
<svg style="left:1513px;top:59.5px" width="16" height="15" viewBox="0 0 16 15"><rect x="0.5" y="0.5" width="15" height="14" fill="#f6f6f0" stroke="#6a6a6a"/><rect x="1" y="1" width="14" height="3" fill="#1f2a8a"/><path d="M4 6.500 L12.500 12.500 M12.500 6.500 L4 12.500" stroke="#b8b800" stroke-width="2.400"/><path d="M4 6.500 L12.500 12.500 M12.500 6.500 L4 12.500" stroke="#f4f43a" stroke-width="1.100"/></svg>
<div class="a" style="left:1534px;top:60.500px;font-size:12.800px;color:#101010;text-shadow:0 0 4px #fff,0 0 5px #fff,0 0 7px #fff,0 0 9px #fff,0 0 12px #fff">Checklist Editor</div>
<div style="left:1851px;top:53.9px;width:46px;height:18.6px;border:1px solid #ffffff80;border-top:none;border-radius:0 0 5px 5px;background:linear-gradient(#70707860,#30303860 50%,#08080c60 52%,#20202860);box-shadow:0 0 0 1px #00000070"><div style="left:0;top:-1px;width:100%;height:100%;font:bold 14px 'Liberation Sans',sans-serif;color:#fff;text-shadow:0 0 2px #000" class="ctr">x</div></div>
<div style="left:1511px;top:80px;width:387px;height:691px;background:#9fdbdb;border:2px solid #000;border-right-width:1px;border-bottom-width:1px"></div>
<div class="up" style="left:1513.7px;top:83px;width:136.6px;height:33px;border-width:2.500px;border-right-color:#3a6a6a;border-bottom-color:#2a4a4a"><div class="s sl" style="left:11px;top:6.500px;font-size:15.500px"><span class="i u">F</span>ile</div><div class="s sl" style="left:53px;top:6.500px;font-size:15.500px"><span class="i u">E</span>dit</div><div class="s sl" style="left:95px;top:6.500px;font-size:15.500px"><span class="i u">R</span>un</div></div>
<div class="ctr" style="left:1513.7px;top:117.9px;width:383.3px;height:18.6px;border-top:1.500px solid #000;border-bottom:1.500px solid #000"><div class="s sx" style="font-size:15.500px;position:static">fp-qae</div></div>
<div style="left:1512.5px;top:137.5px;width:385.0px;height:607.5px;background:#55ccb0;border:2px solid;border-color:#237c66 #aaf2e0 #aaf2e0 #237c66"></div>
<div style="left:1869.4px;top:140px;width:2.6px;height:603px;background:#000"></div>
<div style="left:1514px;top:140px;width:355.4px;height:116.5px;background:#9fdbdb"></div>
<div style="left:1514px;top:256.3px;width:355.4px;height:2.7px;background:#000"></div>
<div class="up" style="left:1682px;top:142px;width:44px;height:29px;"><div class="mr" style="left:2.500px;top:8px;font-size:14.200px">ERF:</div></div>
<div class="dn" style="left:1730.5px;top:142px;width:103.1px;height:29px;overflow:hidden"><div style="left:2px;top:1px;width:3px;height:14px;border-left:1px dotted #000;border-top:1px dotted #000;border-bottom:1px dotted #000"></div><div class="mr" style="left:4.5px;top:1.500px;font-size:14.600px;color:#1a1a1a">Std (Mils)</div></div>
<div class="up" style="left:1838.6px;top:142px;width:29.2px;height:29px;border-width:2.500px"><div style="left:1.500px;top:1.500px;width:21px;height:21px;border:1.300px solid #000" class="ctr"><b style="font:bold 21px 'Liberation Sans',sans-serif;position:static">?</b></div></div>
<div class="up ctr" style="left:1518px;top:177.5px;width:113px;height:21.8px;"><div class="s sx" style="font-size:15.500px;position:static">Parameters...</div></div>
<div class="up ctr" style="left:1634.8px;top:177.5px;width:115.7px;height:21.8px;"><div class="s sx" style="font-size:15.500px;position:static">Ranges...</div></div>
<div class="up ctr" style="left:1755.5px;top:177.5px;width:112.3px;height:21.8px;"><div class="s sx" style="font-size:15.500px;position:static">Online...</div></div>
<div class="mr" style="left:1656.800px;top:203.5px;font-size:14.300px;color:#1a1a1a">04 May 2019</div>
<div class="mr" style="left:1650.700px;top:218.5px;font-size:14.400px;color:#1a1a1a">23:31 - 0:00:01</div>
<div class="tup" style="left:1821.5px;top:205px;width:29.2px;height:29.5px;border-width:2.500px"><svg style="left:0.500px;top:0.500px" width="24" height="24" viewBox="0 0 24 24"><rect x="1.500" y="1.500" width="20" height="20" fill="none" stroke="#000" stroke-width="1.200"/><circle cx="9.500" cy="9.500" r="5.800" fill="none" stroke="#000" stroke-width="1.300"/><path d="M6.500 9.500h6M9.500 6.500v6" stroke="#000" stroke-width="1.200"/><path d="M13.500 13.500L20 20" stroke="#000" stroke-width="3.400" stroke-linecap="round"/></svg></div>
<div style="left:1853.7px;top:202px;width:15.7px;height:34px;background:#ff2020;border-left:1px solid #000"><div style="left:3px;top:9px;font:bold 13px 'Liberation Sans',sans-serif;color:#8a0000;letter-spacing:-1px;line-height:1">!!</div></div>
<div style="left:1514px;top:236.3px;width:355.4px;height:20.0px;background:#fffccf;overflow:hidden"><div class="mr" style="left:159.4px;top:3px;font-size:14.300px;color:#1a1a1a"></div></div>
<div style="left:1514px;top:259px;width:355.4px;height:116.5px;background:#9fdbdb"></div>
<div style="left:1514px;top:375.3px;width:355.4px;height:2.7px;background:#000"></div>
<div class="up" style="left:1682px;top:261px;width:44px;height:29px;"><div class="mr" style="left:2.500px;top:8px;font-size:14.200px">ERF:</div></div>
<div class="dn" style="left:1730.5px;top:261px;width:103.1px;height:29px;overflow:hidden"><div style="left:2px;top:1px;width:3px;height:14px;border-left:1px dotted #000;border-top:1px dotted #000;border-bottom:1px dotted #000"></div><div class="mr" style="left:4.5px;top:1.500px;font-size:14.600px;color:#1a1a1a">signal (Mi</div></div>
<div class="up" style="left:1838.6px;top:261px;width:29.2px;height:29px;border-width:2.500px"><div style="left:1.500px;top:1.500px;width:21px;height:21px;border:1.300px solid #000" class="ctr"><b style="font:bold 21px 'Liberation Sans',sans-serif;position:static">?</b></div></div>
<div class="up ctr" style="left:1518px;top:296.5px;width:113px;height:21.8px;"><div class="s sx" style="font-size:15.500px;position:static">Parameters...</div></div>
<div class="up ctr" style="left:1634.8px;top:296.5px;width:115.7px;height:21.8px;"><div class="s sx" style="font-size:15.500px;position:static">Ranges...</div></div>
<div class="up ctr" style="left:1755.5px;top:296.5px;width:112.3px;height:21.8px;"><div class="s sx" style="font-size:15.500px;position:static">Online...</div></div>
<div class="mr" style="left:1656.800px;top:322.5px;font-size:14.300px;color:#1a1a1a">04 May 2019</div>
<div class="mr" style="left:1650.700px;top:337.5px;font-size:14.400px;color:#1a1a1a">23:31 - 0:00:02</div>
<div class="tup" style="left:1821.5px;top:324px;width:29.2px;height:29.5px;border-width:2.500px"><svg style="left:0.500px;top:0.500px" width="24" height="24" viewBox="0 0 24 24"><rect x="1.500" y="1.500" width="20" height="20" fill="none" stroke="#000" stroke-width="1.200"/><circle cx="9.500" cy="9.500" r="5.800" fill="none" stroke="#000" stroke-width="1.300"/><path d="M6.500 9.500h6M9.500 6.500v6" stroke="#000" stroke-width="1.200"/><path d="M13.500 13.500L20 20" stroke="#000" stroke-width="3.400" stroke-linecap="round"/></svg></div>
<div style="left:1853.7px;top:321px;width:15.7px;height:34px;background:#ff2020;border-left:1px solid #000"><div style="left:3px;top:9px;font:bold 13px 'Liberation Sans',sans-serif;color:#8a0000;letter-spacing:-1px;line-height:1">!!</div></div>
<div style="left:1514px;top:355.3px;width:355.4px;height:20.0px;background:#fffccf;overflow:hidden"><div class="mr" style="left:159.4px;top:3px;font-size:14.300px;color:#1a1a1a">Passed</div></div>
<div style="left:1514px;top:378px;width:355.4px;height:116.5px;background:#9fdbdb"></div>
<div style="left:1514px;top:494.3px;width:355.4px;height:2.7px;background:#000"></div>
<div class="up" style="left:1682px;top:380px;width:44px;height:29px;"><div class="mr" style="left:2.500px;top:8px;font-size:14.200px">ERF:</div></div>
<div class="dn" style="left:1730.5px;top:380px;width:103.1px;height:29px;overflow:hidden"><div style="left:2px;top:1px;width:3px;height:14px;border-left:1px dotted #000;border-top:1px dotted #000;border-bottom:1px dotted #000"></div><div class="mr" style="left:4.5px;top:1.500px;font-size:14.600px;color:#1a1a1a">P/G (Mils)</div></div>
<div class="up" style="left:1838.6px;top:380px;width:29.2px;height:29px;border-width:2.500px"><div style="left:1.500px;top:1.500px;width:21px;height:21px;border:1.300px solid #000" class="ctr"><b style="font:bold 21px 'Liberation Sans',sans-serif;position:static">?</b></div></div>
<div class="up ctr" style="left:1518px;top:415.5px;width:113px;height:21.8px;"><div class="s sx" style="font-size:15.500px;position:static">Parameters...</div></div>
<div class="up ctr" style="left:1634.8px;top:415.5px;width:115.7px;height:21.8px;"><div class="s sx" style="font-size:15.500px;position:static">Ranges...</div></div>
<div class="up ctr" style="left:1755.5px;top:415.5px;width:112.3px;height:21.8px;"><div class="s sx" style="font-size:15.500px;position:static">Online...</div></div>
<div class="mr" style="left:1656.800px;top:441.5px;font-size:14.300px;color:#1a1a1a">04 May 2019</div>
<div class="mr" style="left:1650.700px;top:456.5px;font-size:14.400px;color:#1a1a1a">23:31 - 0:00:03</div>
<div class="tup" style="left:1821.5px;top:443px;width:29.2px;height:29.5px;border-width:2.500px"><svg style="left:0.500px;top:0.500px" width="24" height="24" viewBox="0 0 24 24"><rect x="1.500" y="1.500" width="20" height="20" fill="none" stroke="#000" stroke-width="1.200"/><circle cx="9.500" cy="9.500" r="5.800" fill="none" stroke="#000" stroke-width="1.300"/><path d="M6.500 9.500h6M9.500 6.500v6" stroke="#000" stroke-width="1.200"/><path d="M13.500 13.500L20 20" stroke="#000" stroke-width="3.400" stroke-linecap="round"/></svg></div>
<div style="left:1853.7px;top:440px;width:15.7px;height:34px;background:#10e010;border-left:1px solid #000"></div>
<div style="left:1514px;top:474.3px;width:355.4px;height:20.0px;background:#fffccf;overflow:hidden"><div class="mr" style="left:159.4px;top:3px;font-size:14.300px;color:#1a1a1a"></div></div>
<div style="left:1514px;top:497px;width:355.4px;height:116.5px;background:#9fdbdb"></div>
<div style="left:1514px;top:613.3px;width:355.4px;height:2.7px;background:#000"></div>
<div class="up" style="left:1682px;top:499px;width:44px;height:29px;"><div class="mr" style="left:2.500px;top:8px;font-size:14.200px">ERF:</div></div>
<div class="dn" style="left:1730.5px;top:499px;width:103.1px;height:29px;overflow:hidden"><div style="left:2px;top:1px;width:3px;height:14px;border-left:1px dotted #000;border-top:1px dotted #000;border-bottom:1px dotted #000"></div><div class="mr" style="left:-1.5px;top:1.500px;font-size:14.600px;color:#1a1a1a">Solder Mask</div></div>
<div class="up" style="left:1838.6px;top:499px;width:29.2px;height:29px;border-width:2.500px"><div style="left:1.500px;top:1.500px;width:21px;height:21px;border:1.300px solid #000" class="ctr"><b style="font:bold 21px 'Liberation Sans',sans-serif;position:static">?</b></div></div>
<div class="up ctr" style="left:1518px;top:534.5px;width:113px;height:21.8px;"><div class="s sx" style="font-size:15.500px;position:static">Parameters...</div></div>
<div class="up ctr" style="left:1634.8px;top:534.5px;width:115.7px;height:21.8px;"><div class="s sx" style="font-size:15.500px;position:static">Ranges...</div></div>
<div class="up ctr" style="left:1755.5px;top:534.5px;width:112.3px;height:21.8px;"><div class="s sx" style="font-size:15.500px;position:static">Online...</div></div>
<div class="mr" style="left:1656.800px;top:560.5px;font-size:14.300px;color:#1a1a1a">04 May 2019</div>
<div class="mr" style="left:1650.700px;top:575.5px;font-size:14.400px;color:#1a1a1a">23:31 - 0:00:04</div>
<div class="tup" style="left:1821.5px;top:562px;width:29.2px;height:29.5px;border-width:2.500px"><svg style="left:0.500px;top:0.500px" width="24" height="24" viewBox="0 0 24 24"><rect x="1.500" y="1.500" width="20" height="20" fill="none" stroke="#000" stroke-width="1.200"/><circle cx="9.500" cy="9.500" r="5.800" fill="none" stroke="#000" stroke-width="1.300"/><path d="M6.500 9.500h6M9.500 6.500v6" stroke="#000" stroke-width="1.200"/><path d="M13.500 13.500L20 20" stroke="#000" stroke-width="3.400" stroke-linecap="round"/></svg></div>
<div style="left:1853.7px;top:559px;width:15.7px;height:34px;background:#ff2020;border-left:1px solid #000"><div style="left:3px;top:9px;font:bold 13px 'Liberation Sans',sans-serif;color:#8a0000;letter-spacing:-1px;line-height:1">!!</div></div>
<div style="left:1514px;top:593.3px;width:355.4px;height:20.0px;background:#fffccf;overflow:hidden"><div class="mr" style="left:267.4px;top:3px;font-size:14.300px;color:#1a1a1a">Passed</div></div>
<div style="left:1514px;top:616px;width:355.4px;height:116.5px;background:#9fdbdb"></div>
<div style="left:1514px;top:732.3px;width:355.4px;height:2.7px;background:#000"></div>
<div class="up" style="left:1682px;top:618px;width:44px;height:29px;"><div class="mr" style="left:2.500px;top:8px;font-size:14.200px">ERF:</div></div>
<div class="dn" style="left:1730.5px;top:618px;width:103.1px;height:29px;overflow:hidden"><div style="left:2px;top:1px;width:3px;height:14px;border-left:1px dotted #000;border-top:1px dotted #000;border-bottom:1px dotted #000"></div><div class="mr" style="left:-1.5px;top:1.500px;font-size:14.600px;color:#1a1a1a">Silk Screen</div></div>
<div class="up" style="left:1838.6px;top:618px;width:29.2px;height:29px;border-width:2.500px"><div style="left:1.500px;top:1.500px;width:21px;height:21px;border:1.300px solid #000" class="ctr"><b style="font:bold 21px 'Liberation Sans',sans-serif;position:static">?</b></div></div>
<div class="up ctr" style="left:1518px;top:653.5px;width:113px;height:21.8px;"><div class="s sx" style="font-size:15.500px;position:static">Parameters...</div></div>
<div class="up ctr" style="left:1634.8px;top:653.5px;width:115.7px;height:21.8px;"><div class="s sx" style="font-size:15.500px;position:static">Ranges...</div></div>
<div class="up ctr" style="left:1755.5px;top:653.5px;width:112.3px;height:21.8px;"><div class="s sx" style="font-size:15.500px;position:static">Online...</div></div>
<div class="mr" style="left:1656.800px;top:679.5px;font-size:14.300px;color:#1a1a1a">04 May 2019</div>
<div class="mr" style="left:1650.700px;top:694.5px;font-size:14.400px;color:#1a1a1a">23:31 - 0:00:05</div>
<div class="tup" style="left:1821.5px;top:681px;width:29.2px;height:29.5px;border-width:2.500px"><svg style="left:0.500px;top:0.500px" width="24" height="24" viewBox="0 0 24 24"><rect x="1.500" y="1.500" width="20" height="20" fill="none" stroke="#000" stroke-width="1.200"/><circle cx="9.500" cy="9.500" r="5.800" fill="none" stroke="#000" stroke-width="1.300"/><path d="M6.500 9.500h6M9.500 6.500v6" stroke="#000" stroke-width="1.200"/><path d="M13.500 13.500L20 20" stroke="#000" stroke-width="3.400" stroke-linecap="round"/></svg></div>
<div style="left:1853.7px;top:678px;width:15.7px;height:34px;background:#ff2020;border-left:1px solid #000"><div style="left:3px;top:9px;font:bold 13px 'Liberation Sans',sans-serif;color:#8a0000;letter-spacing:-1px;line-height:1">!!</div></div>
<div style="left:1514px;top:712.3px;width:355.4px;height:20.0px;background:#fffccf;overflow:hidden"><div class="mr" style="left:159.4px;top:3px;font-size:14.300px;color:#1a1a1a"></div></div>
<div style="left:1514px;top:735px;width:355.4px;height:8px;background:#9fdbdb"></div>
<div style="left:1520px;top:147.5px;width:13px;height:12.9px;border:1.500px solid;border-color:#5b9393 #d4f1f1 #d4f1f1 #5b9393;background:#c0e4e4"><svg style="left:0;top:-1px" width="11" height="11" viewBox="0 0 11 11"><path d="M1.500 3.500 L3.800 8.500 L9.500 1.500" stroke="#d01050" stroke-width="2" fill="none"/></svg></div>
<div style="left:1552px;top:146px;width:22px;height:22px;background:#20e020;border:1px solid #0a7a0a"><svg style="left:4px;top:1px" width="12" height="19" viewBox="0 0 12 19"><path d="M3 1h6v11l-3 6l-3-6z" fill="#30e830" stroke="#000" stroke-width="1.200"/><path d="M3 4l6 2M3 7l6 2M3 10l6 2" stroke="#000" stroke-width="1"/></svg></div>
<div style="left:1578px;top:146px;width:104px;height:22px;overflow:hidden"><div class="s sl" style="left:0.600px;top:2.500px;font-size:16.500px">Board-Drill Checks</div></div>
<div style="left:1879px;top:140px;width:17px;height:603px;background:#4ab89e;border:2px solid;border-color:#237c66 #aaf2e0 #aaf2e0 #237c66"></div>
<svg style="left:1880.5px;top:142px" width="14" height="16" viewBox="0 0 14 16"><polygon points="7.0,1.0 13.0,15.0 1.0,15.0" fill="#55ccb0"/><path d="M7.0 1.0L13.0 15.0L1.0 15.0" stroke="#237c66" stroke-width="2" fill="none"/><path d="M1.0 15.0L7.0 1.0" stroke="#aaf2e0" stroke-width="2" fill="none"/></svg>
<svg style="left:1880.5px;top:725px" width="14" height="16" viewBox="0 0 14 16"><polygon points="1.0,1.0 13.0,1.0 7.0,15.0" fill="#55ccb0"/><path d="M1.0 1.0L13.0 1.0L7.0 15.0" stroke="#237c66" stroke-width="2" fill="none"/><path d="M7.0 15.0L1.0 1.0" stroke="#aaf2e0" stroke-width="2" fill="none"/></svg>
<div style="left:1880.5px;top:251.8px;width:14.0px;height:475.2px;background:#55ccb0;border:2px solid;border-color:#aaf2e0 #237c66 #237c66 #aaf2e0"></div>
<div class="up" style="left:1513.5px;top:747.4px;width:380.9px;height:18.6px;"></div>
<div style="left:1210px;top:183.3px;width:481.6px;height:336.7px;border-radius:7px 7px 0 0;border:1px solid #20284a;box-shadow:0 0 0 1px #ffffff60 inset,0 1px 6px 1px #00000066;background:linear-gradient(#f0f4ff58,#e8ecff40 14px,#e0e8ff38 28px,#e0e8ff30);backdrop-filter:blur(3.5px)"></div>
<div style="left:1500px;top:185px;width:190.6px;height:27.5px;border-radius:0 6px 0 0;background:linear-gradient(90deg,#e0f4ff00,#e0f4ff50 14px,#e4f6ff58)"></div>
<div style="left:1686.5px;top:212px;width:4.1px;height:308px;background:#e4f6ff70"></div>
<div style="left:1211px;top:212px;width:5.5px;height:308px;background:linear-gradient(#00002060,#000028a0 40px)"></div>
<svg style="left:1218.4px;top:191px" width="16" height="15" viewBox="0 0 16 15"><rect x="0.5" y="0.5" width="15" height="14" fill="#f6f6f0" stroke="#6a6a6a"/><rect x="1" y="1" width="14" height="3" fill="#1f2a8a"/><path d="M4 6.500 L12.500 12.500 M12.500 6.500 L4 12.500" stroke="#b8b800" stroke-width="2.400"/><path d="M4 6.500 L12.500 12.500 M12.500 6.500 L4 12.500" stroke="#f4f43a" stroke-width="1.100"/></svg>
<div class="a" style="left:1239px;top:191.500px;font-size:12.900px;text-shadow:0 0 5px #fff,0 0 5px #fff,0 0 7px #fff,0 0 9px #fff">Results histogram</div>
<div style="left:1639.5px;top:184.5px;width:46.5px;height:18.1px;border:1px solid #ffffffc0;border-top:none;border-radius:0 0 5px 5px;background:linear-gradient(#ffffff70,#e0f0f050 50%,#b0d0d050 52%,#d0e8e860);box-shadow:0 0 0 1px #50606070"><div style="left:0;top:-1px;width:100%;height:100%;font:bold 14px 'Liberation Sans',sans-serif;color:#fff;text-shadow:0 0 1px #000,0 0 2px #000,0 0 2px #333" class="ctr">x</div></div>
<div style="left:1216.5px;top:212.5px;width:470.0px;height:307.5px;background:#55ccb0;border:1px solid #1d4f45"></div>
<div style="left:1219px;top:215px;width:465px;height:305px;border:2px solid;border-color:#aaf2e0 #237c66 #237c66 #aaf2e0"></div>
<div style="left:1222.6px;top:217.7px;width:101.4px;height:137.1px;background:#9fdbdb;border:2px solid #000"></div>
<svg style="left:1227.4px;top:224.8px" width="16" height="16" viewBox="0 0 16 16"><polygon points="8,1 15,8 8,15 1,8" fill="#9fdbdb"/><path d="M1 8 L8 1 L15 8" stroke="#d4f1f1" stroke-width="1.800" fill="none"/><path d="M1 8 L8 15 L15 8" stroke="#5b9393" stroke-width="1.800" fill="none"/></svg>
<div class="m" style="left:1247px;top:226.70000000000002px;font-size:15px">Count</div>
<svg style="left:1227.4px;top:251.7px" width="16" height="16" viewBox="0 0 16 16"><polygon points="8,1 15,8 8,15 1,8" fill="#9fdbdb"/><path d="M1 8 L8 1 L15 8" stroke="#d4f1f1" stroke-width="1.800" fill="none"/><path d="M1 8 L8 15 L15 8" stroke="#5b9393" stroke-width="1.800" fill="none"/></svg>
<div class="m" style="left:1247px;top:253.6px;font-size:15px">Average</div>
<svg style="left:1227.4px;top:278.6px" width="16" height="16" viewBox="0 0 16 16"><polygon points="8,1 15,8 8,15 1,8" fill="#9fdbdb"/><path d="M1 8 L8 1 L15 8" stroke="#d4f1f1" stroke-width="1.800" fill="none"/><path d="M1 8 L8 15 L15 8" stroke="#5b9393" stroke-width="1.800" fill="none"/></svg>
<div class="m" style="left:1247px;top:280.5px;font-size:15px">Sum</div>
<svg style="left:1227.4px;top:305.5px" width="16" height="16" viewBox="0 0 16 16"><polygon points="8,1 15,8 8,15 1,8" fill="#d80c50"/><path d="M1 8 L8 1 L15 8" stroke="#5b9393" stroke-width="1.800" fill="none"/><path d="M1 8 L8 15 L15 8" stroke="#d4f1f1" stroke-width="1.800" fill="none"/></svg>
<div class="m" style="left:1247px;top:307.4px;font-size:15px">Min</div>
<svg style="left:1227.4px;top:332.4px" width="16" height="16" viewBox="0 0 16 16"><polygon points="8,1 15,8 8,15 1,8" fill="#9fdbdb"/><path d="M1 8 L8 1 L15 8" stroke="#d4f1f1" stroke-width="1.800" fill="none"/><path d="M1 8 L8 15 L15 8" stroke="#5b9393" stroke-width="1.800" fill="none"/></svg>
<div class="m" style="left:1247px;top:334.29999999999995px;font-size:15px">Max</div>
<div style="left:1222.6px;top:356.3px;width:85.4px;height:163.7px;background:#9fdbdb;border:2px solid;border-color:#5b9393 #d4f1f1 #d4f1f1 #5b9393"></div>
<div style="left:1227.8px;top:360.5px;width:72.0px;height:14.3px;background:#000"><div class="m" style="left:0.500px;top:0.800px;color:#9fdbdb;font-size:15px;letter-spacing:0.050px">Spacing</div></div>
<div style="left:1310.3px;top:356.3px;width:11.9px;height:163.7px;background:#7fbcbc;border:2px solid;border-color:#5b9393 #d4f1f1 #d4f1f1 #5b9393"></div>
<svg style="left:1311.8px;top:358.3px" width="8.9" height="10.9" viewBox="0 0 8.9 10.9"><polygon points="4.5,1.0 7.9,9.9 1.0,9.9" fill="#9fdbdb"/><path d="M4.5 1.0L7.9 9.9L1.0 9.9" stroke="#5b9393" stroke-width="2" fill="none"/><path d="M1.0 9.9L4.5 1.0" stroke="#d4f1f1" stroke-width="2" fill="none"/></svg>
<svg style="left:1311.8px;top:507.1px" width="8.9" height="10.9" viewBox="0 0 8.9 10.9"><polygon points="1.0,1.0 7.9,1.0 4.5,9.9" fill="#9fdbdb"/><path d="M1.0 1.0L7.9 1.0L4.5 9.9" stroke="#5b9393" stroke-width="2" fill="none"/><path d="M4.5 9.9L1.0 1.0" stroke="#d4f1f1" stroke-width="2" fill="none"/></svg>
<div style="left:1311.8px;top:370.2px;width:8.9px;height:135.9px;background:#9fdbdb;border:2px solid;border-color:#d4f1f1 #5b9393 #5b9393 #d4f1f1"></div>
<div style="left:1326px;top:217.7px;width:354.5px;height:222.3px;background:#9fdbdb;border:2px solid #000"></div>
<div class="ctr" style="left:1374.3px;top:222.5px;width:258.4px;height:20.5px;background:#b4ffff;border:1px solid #000;border-right-width:1.500px;border-bottom-width:1.500px;box-shadow:1.500px 1.500px 0 #5a8a8a"><div class="mi" style="font-size:15px;letter-spacing:0.100px;margin-top:5px">Size(Spacing) / Min(Spacing)</div></div>
<div class="m" style="left:1338.700px;top:245.500px;font-size:15px">5.011</div>
<div style="left:1333.6px;top:260.4px;width:55.0px;height:123.6px;background:#ff1c1c"></div>
<div style="left:1328px;top:384px;width:350.8px;height:3.3px;background:#000"></div>
<div style="left:1333.6px;top:388.6px;width:55.0px;height:28.4px;background:#ff1c1c;border:1px solid #a01010;overflow:hidden"><div class="m" style="left:9.500px;top:3px;font-size:13px;color:#3a0000">5-</div><div class="m" style="left:17.500px;top:17.500px;font-size:13px;color:#3a0000">5.1</div></div>
<div style="left:1329.6px;top:425.4px;width:347.8px;height:11.4px;background:#7fbcbc;border:2px solid;border-color:#5b9393 #d4f1f1 #d4f1f1 #5b9393"></div>
<svg style="left:1331.6px;top:426.9px" width="10.4" height="8.4" viewBox="0 0 10.4 8.4"><polygon points="1.0,4.2 9.4,1.0 9.4,7.4" fill="#9fdbdb"/><path d="M1.0 4.2L9.4 1.0L9.4 7.4" stroke="#5b9393" stroke-width="2" fill="none"/><path d="M9.4 7.4L1.0 4.2" stroke="#d4f1f1" stroke-width="2" fill="none"/></svg>
<svg style="left:1665.0px;top:426.9px" width="10.4" height="8.4" viewBox="0 0 10.4 8.4"><polygon points="1.0,1.0 9.4,4.2 1.0,7.4" fill="#9fdbdb"/><path d="M1.0 1.0L9.4 4.2L1.0 7.4" stroke="#5b9393" stroke-width="2" fill="none"/><path d="M1.0 7.4L1.0 1.0" stroke="#d4f1f1" stroke-width="2" fill="none"/></svg>
<div style="left:1343.0px;top:426.9px;width:321.0px;height:8.4px;background:#9fdbdb;border:2px solid;border-color:#d4f1f1 #5b9393 #5b9393 #d4f1f1"></div>
<div style="left:1328px;top:441px;width:96px;height:79px;background:#9fdbdb;border:2px solid;border-color:#5b9393 #d4f1f1 #d4f1f1 #5b9393"></div>
<div style="left:1333.6px;top:445.3px;width:80.4px;height:14.7px;background:#000"><div class="m" style="left:0.500px;top:-0.500px;color:#9fdbdb;font-size:15px">Spacing</div></div>
<div style="left:1425.5px;top:441px;width:12.9px;height:79px;background:#7fbcbc;border:2px solid;border-color:#5b9393 #d4f1f1 #d4f1f1 #5b9393"></div>
<svg style="left:1427.0px;top:443px" width="9.9" height="11.9" viewBox="0 0 9.9 11.9"><polygon points="5.0,1.0 8.9,10.9 1.0,10.9" fill="#9fdbdb"/><path d="M5.0 1.0L8.9 10.9L1.0 10.9" stroke="#5b9393" stroke-width="2" fill="none"/><path d="M1.0 10.9L5.0 1.0" stroke="#d4f1f1" stroke-width="2" fill="none"/></svg>
<svg style="left:1427.0px;top:506.1px" width="9.9" height="11.9" viewBox="0 0 9.9 11.9"><polygon points="1.0,1.0 8.9,1.0 5.0,10.9" fill="#9fdbdb"/><path d="M1.0 1.0L8.9 1.0L5.0 10.9" stroke="#5b9393" stroke-width="2" fill="none"/><path d="M5.0 10.9L1.0 1.0" stroke="#d4f1f1" stroke-width="2" fill="none"/></svg>
<div style="left:1427.0px;top:455.9px;width:9.9px;height:49.2px;background:#9fdbdb;border:2px solid;border-color:#d4f1f1 #5b9393 #5b9393 #d4f1f1"></div>
<div style="left:1439.8px;top:441px;width:240.2px;height:79px;background:#9fdbdb;border:2px solid;border-color:#d4f1f1 #5b9393 #5b9393 #d4f1f1"><div class="m" style="left:71.500px;top:2.500px;font-size:15px">Resolution</div></div>
<div style="left:1313.6px;top:223.8px;width:123.2px;height:78.2px;border:2px solid #ff3cf6;box-shadow:1px 1px 2px #00000055"></div>
<div style="left:222px;top:208px;width:509px;height:671px;border-radius:7px 7px 6px 6px;border:1px solid #20284a;box-shadow:0 0 0 1px #ffffff55 inset,0 1px 6px 1px #00000066;background:linear-gradient(#ffffff30,#ffffff08 12px,#ffffff0c);backdrop-filter:blur(2.5px)"></div>
<div style="left:223px;top:209px;width:179px;height:27px;border-radius:6px 0 0 0;background:linear-gradient(90deg,#f0f0ff50 0,#e8e8ff48 150px,#e8e8ff00 178px)"></div>
<div style="left:223px;top:236px;width:5px;height:634px;background:#e8e8ff30"></div>
<svg style="left:229.2px;top:214.5px" width="16" height="15" viewBox="0 0 16 15"><rect x="0.5" y="0.5" width="15" height="14" fill="#f6f6f0" stroke="#6a6a6a"/><rect x="1" y="1" width="14" height="3" fill="#1f2a8a"/><path d="M4 6.500 L12.500 12.500 M12.500 6.500 L4 12.500" stroke="#b8b800" stroke-width="2.400"/><path d="M4 6.500 L12.500 12.500 M12.500 6.500 L4 12.500" stroke="#f4f43a" stroke-width="1.100"/></svg>
<div class="a" style="left:250px;top:215.500px;font-size:12.600px;text-shadow:0 0 5px #fff,0 0 5px #fff,0 0 7px #fff,0 0 9px #fff">Results viewer</div>
<div style="left:677.6px;top:208.5px;width:46.9px;height:19.1px;border:1px solid #ffffff90;border-top:none;border-radius:0 0 5px 5px;background:linear-gradient(#b8c4e860,#4a5a9860 50%,#1a246060 52%,#2a3a8060);box-shadow:0 0 0 1px #00000070"><div style="left:0;top:0;width:100%;height:100%;font:bold 14px 'Liberation Sans',sans-serif;color:#fff;text-shadow:0 0 2px #000" class="ctr">x</div></div>
<div style="left:725px;top:232px;width:5.3px;height:642px;background:linear-gradient(#20203040 0,#f0f4c0 3%,#e8f4b0 10%,#a8f0a0 28%,#48e888 45%,#50d8a0 70%,#48c0a0 82%,#183828 86.500%,#000 89%,#000 100%);border-right:1px solid #50606080"></div>
<div style="left:725.5px;top:765.5px;width:5.0px;height:18.5px;background:#ff1010c0"></div>
<div style="left:227.5px;top:236px;width:497.5px;height:636px;background:#55ccb0;border:1px solid #1d4f45"></div>
<div class="tup ctr" style="left:230.6px;top:240px;width:491.1px;height:23px;"><div class="s sx" style="font-size:15.5px;position:static;margin-top:-2px">Solder Mask Checks</div></div>
<div style="left:229.5px;top:266px;width:170.0px;height:497px;border:1.5px solid #000"></div>
<div style="left:399px;top:266px;width:325px;height:496px;border:1.5px solid #000;border-left:none"></div>
<div class="up ctr" style="left:232px;top:268.3px;width:46px;height:27.1px;"><div class="mi" style="font-weight:normal;font-size:15px;margin-top:3px">None</div></div>
<div class="up ctr" style="left:281px;top:268.3px;width:75.8px;height:27.1px;border-width:1px"><div class="mi" style="margin-top:3px">Layers</div></div>
<div class="up ctr" style="left:359.3px;top:268.3px;width:37.7px;height:27.1px;"><div class="mi" style="font-weight:normal;margin-top:3px">All</div></div>
<div style="left:607.8px;top:267.5px;width:115.2px;height:29.0px;background:#9fdbdb"></div>
<div class="up ctr" style="left:402.9px;top:268.3px;width:204.9px;height:27.1px;"><div class="mi" style="margin-top:4px">Categories (15)</div></div>
<div class="m" style="left:610px;top:276px">Meas:</div>
<div class="up" style="left:661.3px;top:268.3px;width:59.0px;height:27.1px;"><div class="m" style="left:4px;top:6px">All</div><div style="left:39px;top:8.5px;width:12px;height:7px;border:1.5px solid;border-color:#d4f1f1 #5b9393 #5b9393 #d4f1f1"></div></div>
<div class="tdn" style="left:232px;top:298px;width:147.5px;height:443.3px;"></div>
<div style="left:235px;top:301.6px;width:140px;height:14.3px;background:#000"><div class="m" style="left:1px;top:-0.500px;color:#55ccb0">ts</div></div>
<div style="left:235px;top:319.6px;width:140px;height:14.3px;background:#000"><div class="m" style="left:1px;top:-0.500px;color:#55ccb0">bs</div></div>
<div style="left:385.2px;top:298px;width:11.8px;height:443.3px;background:#4ab89e;border:2px solid;border-color:#237c66 #aaf2e0 #aaf2e0 #237c66"></div>
<svg style="left:386.7px;top:300px" width="8.8" height="10.8" viewBox="0 0 8.8 10.8"><polygon points="4.4,1.0 7.8,9.8 1.0,9.8" fill="#55ccb0"/><path d="M4.4 1.0L7.8 9.8L1.0 9.8" stroke="#237c66" stroke-width="2" fill="none"/><path d="M1.0 9.8L4.4 1.0" stroke="#aaf2e0" stroke-width="2" fill="none"/></svg>
<svg style="left:386.7px;top:728.5px" width="8.8" height="10.8" viewBox="0 0 8.8 10.8"><polygon points="1.0,1.0 7.8,1.0 4.4,9.8" fill="#55ccb0"/><path d="M1.0 1.0L7.8 1.0L4.4 9.8" stroke="#237c66" stroke-width="2" fill="none"/><path d="M4.4 9.8L1.0 1.0" stroke="#aaf2e0" stroke-width="2" fill="none"/></svg>
<div style="left:386.7px;top:311.8px;width:8.8px;height:415.7px;background:#55ccb0;border:2px solid;border-color:#aaf2e0 #237c66 #237c66 #aaf2e0"></div>
<div style="left:232px;top:749px;width:147.5px;height:10.8px;background:#4ab89e;border:2px solid;border-color:#237c66 #aaf2e0 #aaf2e0 #237c66"></div>
<svg style="left:234px;top:750.5px" width="9.8" height="7.800000000000001" viewBox="0 0 9.8 7.800000000000001"><polygon points="1.0,3.9 8.8,1.0 8.8,6.8" fill="#55ccb0"/><path d="M1.0 3.9L8.8 1.0L8.8 6.8" stroke="#237c66" stroke-width="2" fill="none"/><path d="M8.8 6.8L1.0 3.9" stroke="#aaf2e0" stroke-width="2" fill="none"/></svg>
<svg style="left:367.7px;top:750.5px" width="9.8" height="7.800000000000001" viewBox="0 0 9.8 7.800000000000001"><polygon points="1.0,1.0 8.8,3.9 1.0,6.8" fill="#55ccb0"/><path d="M1.0 1.0L8.8 3.9L1.0 6.8" stroke="#237c66" stroke-width="2" fill="none"/><path d="M1.0 6.8L1.0 1.0" stroke="#aaf2e0" stroke-width="2" fill="none"/></svg>
<div style="left:244.8px;top:750.5px;width:121.9px;height:7.8px;background:#55ccb0;border:2px solid;border-color:#aaf2e0 #237c66 #237c66 #aaf2e0"></div>
<div class="tdn" style="left:401.4px;top:298px;width:301.8px;height:382.7px;overflow:hidden"></div>
<div style="left:405.5px;top:304.2px;width:294.0px;height:16.0px;overflow:hidden"><div class="m" style="left:0;top:0;letter-spacing:-0.07px">NPTH annular Ring (56)</div></div>
<div style="left:405.5px;top:322.3px;width:294.0px;height:16.0px;overflow:hidden"><div class="m" style="left:0;top:0;letter-spacing:-0.07px">SMD annular Ring (354)</div></div>
<div style="left:405.5px;top:340.4px;width:294.0px;height:16.0px;overflow:hidden"><div class="m" style="left:0;top:0;letter-spacing:-0.07px">Pad annular Ring (468)</div></div>
<div style="left:405.5px;top:358.5px;width:294.0px;height:16.0px;overflow:hidden"><div class="m" style="left:0;top:0;letter-spacing:-0.07px">SMD Pad Gasket (54)</div></div>
<div style="left:405.5px;top:376.6px;width:294.0px;height:16.0px;overflow:hidden"><div class="m" style="left:0;top:0;letter-spacing:-0.07px">Coverage (36)</div></div>
<div style="left:405.5px;top:394.7px;width:294.0px;height:16.0px;overflow:hidden"><div class="m" style="left:0;top:0;letter-spacing:-0.07px">Rout spacing (550)</div></div>
<div style="left:405.7px;top:411.5px;width:293.3px;height:14.2px;background:#000;overflow:hidden"><div class="m" style="left:0;top:0.700px;color:#55ccb0;letter-spacing:-0.07px">SMDs Clearance Bridge (24)</div></div>
<div style="left:405.5px;top:430.9px;width:294.0px;height:16.0px;overflow:hidden"><div class="m" style="left:0;top:0;letter-spacing:-0.07px">SMD to Pad Clearance Bridge (12)</div></div>
<div style="left:405.5px;top:449.0px;width:294.0px;height:16.0px;overflow:hidden"><div class="m" style="left:0;top:0;letter-spacing:-0.07px">SM slivers (24)</div></div>
<div style="left:405.5px;top:467.1px;width:294.0px;height:16.0px;overflow:hidden"><div class="m" style="left:0;top:0;letter-spacing:-0.07px">Pad to Pad Spacing (6)</div></div>
<div style="left:405.5px;top:485.2px;width:294.0px;height:16.0px;overflow:hidden"><div class="m" style="left:0;top:0;letter-spacing:-0.07px">Pad to Non-Pad Spacing (24)</div></div>
<div style="left:405.5px;top:503.3px;width:294.0px;height:16.0px;overflow:hidden"><div class="m" style="left:0;top:0;letter-spacing:-0.07px">Covered VIA to SM (6)</div></div>
<div style="left:405.5px;top:521.4px;width:294.0px;height:16.0px;overflow:hidden"><div class="m" style="left:0;top:0;letter-spacing:-0.07px">Clearance to Clearance Connection</div></div>
<div style="left:405.5px;top:539.5px;width:294.0px;height:16.0px;overflow:hidden"><div class="m" style="left:0;top:0;letter-spacing:-0.07px">Feature too small to check (1088)</div></div>
<div style="left:405.5px;top:557.6px;width:294.0px;height:16.0px;overflow:hidden"><div class="m" style="left:0;top:0;letter-spacing:-0.07px">Partial Clearance on VIA drilled</div></div>
<div style="left:708.9px;top:298px;width:12.8px;height:382.7px;background:#4ab89e;border:2px solid;border-color:#237c66 #aaf2e0 #aaf2e0 #237c66"></div>
<svg style="left:710.4px;top:300px" width="9.8" height="11.8" viewBox="0 0 9.8 11.8"><polygon points="4.9,1.0 8.8,10.8 1.0,10.8" fill="#55ccb0"/><path d="M4.9 1.0L8.8 10.8L1.0 10.8" stroke="#237c66" stroke-width="2" fill="none"/><path d="M1.0 10.8L4.9 1.0" stroke="#aaf2e0" stroke-width="2" fill="none"/></svg>
<svg style="left:710.4px;top:666.9000000000001px" width="9.8" height="11.8" viewBox="0 0 9.8 11.8"><polygon points="1.0,1.0 8.8,1.0 4.9,10.8" fill="#55ccb0"/><path d="M1.0 1.0L8.8 1.0L4.9 10.8" stroke="#237c66" stroke-width="2" fill="none"/><path d="M4.9 10.8L1.0 1.0" stroke="#aaf2e0" stroke-width="2" fill="none"/></svg>
<div style="left:710.4px;top:312.8px;width:9.8px;height:353.1px;background:#55ccb0;border:2px solid;border-color:#aaf2e0 #237c66 #237c66 #aaf2e0"></div>
<div style="left:403px;top:687.8px;width:300.2px;height:11.4px;background:#4ab89e;border:2px solid;border-color:#237c66 #aaf2e0 #aaf2e0 #237c66"></div>
<svg style="left:405px;top:689.3px" width="10.4" height="8.4" viewBox="0 0 10.4 8.4"><polygon points="1.0,4.2 9.4,1.0 9.4,7.4" fill="#55ccb0"/><path d="M1.0 4.2L9.4 1.0L9.4 7.4" stroke="#237c66" stroke-width="2" fill="none"/><path d="M9.4 7.4L1.0 4.2" stroke="#aaf2e0" stroke-width="2" fill="none"/></svg>
<svg style="left:690.8000000000001px;top:689.3px" width="10.4" height="8.4" viewBox="0 0 10.4 8.4"><polygon points="1.0,1.0 9.4,4.2 1.0,7.4" fill="#55ccb0"/><path d="M1.0 1.0L9.4 4.2L1.0 7.4" stroke="#237c66" stroke-width="2" fill="none"/><path d="M1.0 7.4L1.0 1.0" stroke="#aaf2e0" stroke-width="2" fill="none"/></svg>
<div style="left:415.7px;top:689.3px;width:223.3px;height:8.4px;background:#55ccb0;border:2px solid;border-color:#aaf2e0 #237c66 #237c66 #aaf2e0"></div>
<div class="up ctr" style="left:403.4px;top:704.3px;width:52.1px;height:20.5px;border-width:2px"><div class="m" style="margin-top:2px">First</div></div>
<div class="up ctr" style="left:460.4px;top:704.3px;width:43.6px;height:20.5px;border-width:2px"><div class="m" style="margin-top:2px">&lt;---</div></div>
<div class="up ctr" style="left:508.2px;top:704.3px;width:43.3px;height:20.5px;border-width:2px"><div class="m" style="margin-top:2px">---&gt;</div></div>
<div class="up ctr" style="left:556px;top:704.3px;width:43.3px;height:20.5px;border-width:2px"><div class="m" style="margin-top:2px">Last</div></div>
<div class="m" style="left:604.4px;top:709px">Index:</div>
<div class="tdn" style="left:662.8px;top:703.5px;width:57.5px;height:21.3px;"><div style="left:3px;top:2px;width:3px;height:13px;border-left:1.2px solid #000;border-top:1px solid #000;border-bottom:1px solid #000"></div><div class="m" style="left:5.500px;top:0px">945</div></div>
<div style="left:399.5px;top:728.5px;width:222.3px;height:32.8px;border:1.5px solid #000"></div>
<div style="left:400.8px;top:729.8px;width:123.8px;height:30.2px;background:#55ccb0"></div>
<div style="left:524.6px;top:728.5px;width:1.4px;height:32.5px;background:#000"></div>
<div class="up" style="left:408px;top:731.3px;width:114.4px;height:26.2px;"><div class="m" style="left:5px;top:5.500px">Auto Zoom</div><div style="left:94px;top:8.5px;width:12px;height:7px;border:1.5px solid;border-color:#d4f1f1 #5b9393 #5b9393 #d4f1f1"></div></div>
<div style="left:526px;top:729.8px;width:27.2px;height:30.2px;background:#9fdbdb"><div class="m" style="left:0.700px;top:8px">Sv:</div></div>
<div style="left:553.2px;top:729.8px;width:67.3px;height:30.2px;background:#2ee82a"></div>
<div style="left:559px;top:733px;width:57px;height:23.5px;border:2px solid;border-color:#8af088 #158a14 #158a14 #8af088;background:#22dc1e"><div style="left:39px;top:7px;width:12px;height:7px;border:1.5px solid;border-color:#a8f8a0 #158a14 #158a14 #a8f8a0"></div></div>
<div style="left:627px;top:735.6px;width:11.3px;height:12.0px;border:1.5px solid;border-color:#aaf2e0 #237c66 #237c66 #aaf2e0;background:#55ccb0"></div>
<div class="m" style="left:642.500px;top:734px;font-size:14.500px">Show All</div>
<div class="up" style="left:237.3px;top:765.9px;width:158.6px;height:25.9px;"><div class="m" style="left:4.500px;top:5px">Replace layers</div><div style="left:138px;top:8.5px;width:12px;height:7px;border:1.5px solid;border-color:#d4f1f1 #5b9393 #5b9393 #d4f1f1"></div></div>
<div style="left:229.5px;top:793.5px;width:170.0px;height:1.5px;background:#000"></div>
<div style="left:398px;top:762px;width:1.5px;height:33px;background:#000"></div>
<div class="up" style="left:619.8px;top:764px;width:28.7px;height:29px;overflow:hidden"><div style="left:1.500px;top:2px;right:1.500px;bottom:2px;border:1px solid #000"></div><div style="left:0;right:0;top:2px;text-align:center;font:11.500px Liberation Serif,serif;line-height:1;letter-spacing:0.200px;color:#000">DEL</div><div style="left:10px;top:14.500px;width:7px;height:7px;border-radius:4px;background:#e02020;border:1px solid #000"></div></div>
<div class="up" style="left:654px;top:764px;width:28.4px;height:29px;overflow:hidden"><div style="left:1.500px;top:2px;right:1.500px;bottom:2px;border:1px solid #000"></div><div style="left:0;right:0;top:2px;text-align:center;font:11.500px Liberation Serif,serif;line-height:1;letter-spacing:0.200px;color:#000">REF</div><div style="left:10px;top:14.500px;width:7px;height:7px;border-radius:4px;background:#30d020;border:1px solid #000"></div></div>
<div class="up" style="left:687.4px;top:764px;width:34.0px;height:29px;overflow:hidden"><div style="left:1.500px;top:2px;right:1.500px;bottom:2px;border:1px solid #000"></div><div style="left:0;right:0;top:2px;text-align:center;font:11.500px Liberation Serif,serif;line-height:1;letter-spacing:0.200px;color:#000">UNDO</div><svg style="left:10px;top:12px" width="12" height="12" viewBox="0 0 12 12"><path d="M3 4 h4 a2.500 2.500 0 0 1 0 5.500 h-3" fill="none" stroke="#000" stroke-width="2.600"/><path d="M3 4 h4 a2.500 2.500 0 0 1 0 5.500 h-3" fill="none" stroke="#f0e020" stroke-width="1.200"/><polygon points="0.500,4 4,1.500 4,6.500" fill="#f0e020" stroke="#000" stroke-width=".6"/></svg></div>
<div style="left:229.5px;top:795px;width:494.5px;height:21.5px;border:1.5px solid #000;border-top:none"></div>
<div class="m" style="left:283.500px;top:800px;font-size:14.950px">ts 5.011mil  rect40.9x20.58  rect40.9x20.58</div>
<div style="left:230.5px;top:817.4px;width:493.0px;height:19.5px;background:#fffccf;border-top:1px solid #000;border-bottom:1px solid #000"><div class="m" style="left:1px;top:2.800px;font-size:15px">ERF--&gt; smd_bridge = 9 12 14</div></div>
<div class="up ctr" style="left:230.3px;top:839.5px;width:287.4px;height:30.0px;"><div class="m" style="margin-top:3px">Close</div></div>
<div class="up" style="left:523.3px;top:840px;width:30.5px;height:29.5px;border-width:2.500px"><svg style="left:0.800px;top:0.300px" width="24" height="24" viewBox="0 0 24 24"><rect x="2" y="2" width="10" height="14" fill="#b8e4e4"/><rect x="12" y="2" width="10" height="14" fill="#f4e43a"/><rect x="2" y="15.500" width="20" height="6.500" fill="#000"/><path d="M9.500 2v3.500h-1.800v3.500h1.800v3h-2v4H16.300v-4h-2v-3h1.800V5.500h-1.800V2z" fill="#000"/><rect x="6" y="5" width="1.600" height="1.600" fill="#000"/><rect x="16.500" y="5" width="1.600" height="1.600" fill="#000"/></svg></div>
<div class="up" style="left:557.2px;top:840px;width:30.5px;height:29.5px;border-width:2.500px"><svg style="left:0.800px;top:0.300px" width="24" height="24" viewBox="0 0 24 24"><rect x="1.2" y="1.2" width="21.600" height="21.600" fill="none" stroke="#000" stroke-width="1.300"/><rect x="3.500" y="3.500" width="17" height="13.500" fill="#000"/><circle cx="9.300" cy="11.500" r="3.200" fill="#f01818"/><path d="M15.500 5v11M10 11.500h5.500" stroke="#f01818" stroke-width="1.800"/><rect x="4.500" y="18.300" width="15" height="2.200" fill="none" stroke="#000" stroke-width=".9"/></svg></div>
<div class="up" style="left:591.1px;top:840px;width:30.5px;height:29.5px;border-width:2.500px"><svg style="left:0.800px;top:0.300px" width="24" height="24" viewBox="0 0 24 24"><rect x="1.2" y="1.2" width="21.600" height="21.600" fill="none" stroke="#000" stroke-width="1.300"/><text x="2.300" y="16" font-size="11.500" font-family="Liberation Serif" fill="#000" letter-spacing="-0.300">REF</text><path d="M3.500 4.500L20 19.500M20 4.500L3.500 19.500" stroke="#e81818" stroke-width="1.700"/></svg></div>
<div class="up" style="left:625.0px;top:840px;width:30.5px;height:29.5px;border-width:2.500px"><svg style="left:0.800px;top:0.300px" width="24" height="24" viewBox="0 0 24 24"><rect x="1.2" y="1.2" width="21.600" height="21.600" fill="none" stroke="#000" stroke-width="1.300"/><path d="M4.500 3h13.500v14l-4 4H4.500z" fill="#28e020"/><path d="M18 17h-4v4z" fill="#fff" stroke="#000" stroke-width=".7"/><text x="6.500" y="12" font-size="10.500" font-weight="bold" font-family="Liberation Sans" fill="#000">1</text><text x="10.700" y="16.500" font-size="11.500" font-weight="bold" font-family="Liberation Sans" fill="#000">2</text></svg></div>
<div class="up" style="left:658.9px;top:840px;width:30.5px;height:29.5px;border-width:2.500px"><svg style="left:0.800px;top:0.300px" width="24" height="24" viewBox="0 0 24 24"><rect x="1.2" y="1.2" width="21.600" height="21.600" fill="none" stroke="#000" stroke-width="1.300"/><path d="M4.500 3h13.500v14l-4 4H4.500z" fill="#f8f020"/><path d="M18 17h-4v4z" fill="#fff" stroke="#000" stroke-width=".7"/><path d="M6.500 6h10M6.500 8.800h7M6.500 11.600h10M6.500 14.400h7M6.500 17.200h6" stroke="#000" stroke-width="1.300"/></svg></div>
<div class="up" style="left:692.8px;top:840px;width:30.5px;height:29.5px;border-width:2.500px"><svg style="left:0.800px;top:0.300px" width="24" height="24" viewBox="0 0 24 24"><rect x="1.2" y="1.2" width="21.600" height="21.600" fill="none" stroke="#000" stroke-width="1.300"/><path d="M3 19.500H21" stroke="#000" stroke-width="1"/><rect x="4.500" y="11.500" width="2.800" height="8" fill="#e82020"/><rect x="8" y="6.500" width="2.800" height="13" fill="#20c838"/><rect x="11.500" y="3.500" width="2.800" height="16" fill="#e020e0"/><rect x="15" y="8.500" width="2.800" height="11" fill="#2038e0"/><rect x="18" y="11.500" width="2.500" height="8" fill="#20e0f0"/></svg></div>
<div style="left:1027px;top:453.7px;width:786.4px;height:573.3px;border-radius:7px 7px 0 0;border:1px solid #2a3048;box-shadow:0 0 0 1px #ffffff70 inset,0 1px 7px 1px #00000070;background:linear-gradient(#a8c8e890,#789fd680 10px,#78a0d780 26px,#80a8d880);backdrop-filter:blur(7px)"></div>
<div style="left:1028px;top:484px;width:6.5px;height:542px;background:#ffffff66"></div>
<div style="left:1807px;top:484px;width:5.5px;height:542px;background:#dfeaf899"></div>
<div style="left:1028px;top:455.6px;width:272px;height:27.8px;border-radius:6px 0 0 0;background:linear-gradient(90deg,#d8d0e890 0,#c0b0d880 45px,#6868b060 110px,#10186060 170px,#00003070 188px,#00001050 200px,#ffffff00 240px)"></div>
<div style="left:1070px;top:459px;width:106px;height:22px;border-radius:0 11px 11px 0;border:1px solid #ffffff50;background:linear-gradient(#ffffff40,#ffffff18)"></div>
<svg style="left:1086px;top:462.500px" width="15" height="15" viewBox="0 0 15 15"><rect x=".5" y=".5" width="14" height="14" rx="1" fill="#3f58b8" stroke="#1f2f7c"/><rect x="3" y="1" width="9" height="6" fill="#eef2fa"/><rect x="4" y="9.500" width="7" height="5" fill="#1c2450"/><rect x="5" y="10.500" width="2" height="3" fill="#dfe5f5"/></svg>
<svg style="left:1108px;top:463px" width="14" height="14" viewBox="0 0 14 14"><path d="M3 7 a4.300 4.300 0 1 1 3 5.500" fill="none" stroke="#3a62c8" stroke-width="2.200"/><polygon points="0.500,3 6.500,4 2,9" fill="#3a62c8"/></svg>
<svg style="left:1126.5px;top:468.5px" width="6" height="4" viewBox="0 0 6 4"><polygon points="0,0 6,0 3,3.500" fill="#5a6a94"/></svg><svg style="left:1138px;top:463px" width="14" height="14" viewBox="0 0 14 14"><path d="M11 7 a4.300 4.300 0 1 0 -3 5.500" fill="none" stroke="#9aa8c0" stroke-width="2.200"/><polygon points="13.500,3 7.500,4 12,9" fill="#9aa8c0"/></svg>
<svg style="left:1158.8px;top:468.5px" width="6" height="4" viewBox="0 0 6 4"><polygon points="0,0 6,0 3,3.500" fill="#8a96b0"/></svg><svg style="left:1183px;top:465.500px" width="8" height="9" viewBox="0 0 8 9"><path d="M1 1.500h6" stroke="#3a4a78" stroke-width="1.300"/><polygon points="1,4.500 7,4.500 4,8" fill="#3a4a78"/></svg>
<div class="a" style="left:1274px;top:463px;font-size:12.550px;color:#0a0a0a;text-shadow:0 0 5px #fff,0 0 6px #fff,0 0 8px #ffffffc0">2SAAS001A0制作单.xls  [兼容模式] - Microsoft Excel</div>
<div style="left:1705.4px;top:455.1px;width:100.9px;height:16.9px;border:1px solid #ffffffb0;border-top:none;border-radius:0 0 5px 5px;box-shadow:0 0 0 1px #3a4a5a90;overflow:hidden;background:linear-gradient(#ffffff90,#dfe9ef70 48%,#b5c6d070 52%,#d5e2ea80)"><div style="left:26.500px;top:0;width:1px;height:100%;background:#5a6a78a0"></div><div style="left:53.500px;top:0;width:1px;height:100%;background:#5a6a78a0"></div><div style="left:54.500px;top:0;right:0;height:100%;background:linear-gradient(#e8a89c,#d06050 45%,#b82c18 52%,#d86a4a)"></div><div style="left:8px;top:9px;width:11px;height:4px;background:#fff;border:1px solid #4a5a68"></div><div style="left:34.500px;top:3.500px;width:11px;height:9px;border:1px solid #4a5a68;background:#fff"><div style="left:2px;top:2px;right:2px;bottom:2px;background:#a8b8c4;border:1px solid #4a5a68"></div></div><div style="left:54.500px;top:-2px;right:0;height:100%;font:bold 15px 'Liberation Sans',sans-serif;color:#fff;text-shadow:0 0 2px #5a1008,0 0 1px #000" class="ctr">x</div></div>
<div style="left:1034.2px;top:482.2px;width:772.8px;height:543.8px;background:#bfdbff;border:1px solid #6a88b8;border-bottom:none"></div>
<div style="left:1034.7px;top:482.7px;width:771.8px;height:26.3px;background:linear-gradient(#c7defb,#bfd9fb)"></div>
<div style="left:1082px;top:484.5px;width:46.8px;height:25.0px;border:1px solid #8db2e3;border-bottom:none;border-radius:3px 3px 0 0;background:linear-gradient(#eef5fd,#dfeaf8)"></div>
<div class="y ctr" style="left:1065px;top:487px;width:80px;height:20px">开始</div>
<div class="y ctr" style="left:1117.5px;top:487px;width:80px;height:20px">插入</div>
<div class="y ctr" style="left:1182.6px;top:487px;width:80px;height:20px">页面布局</div>
<div class="y ctr" style="left:1247.7px;top:487px;width:80px;height:20px">公式</div>
<div class="y ctr" style="left:1300.8px;top:487px;width:80px;height:20px">数据</div>
<div class="y ctr" style="left:1354.4px;top:487px;width:80px;height:20px">审阅</div>
<div class="y ctr" style="left:1407px;top:487px;width:80px;height:20px">视图</div>
<svg style="left:1722px;top:489.500px" width="14" height="14" viewBox="0 0 14 14"><circle cx="7" cy="7" r="6.300" fill="#2a62d0" stroke="#e6effc" stroke-width="1"/><text x="4.200" y="10.800" font-size="10.500" font-weight="bold" font-family="Liberation Sans" fill="#fff">?</text></svg>
<div style="left:1747px;top:497.5px;width:7px;height:1.8px;background:#7a8aa8"></div>
<svg style="left:1768px;top:491px" width="10" height="9" viewBox="0 0 10 9"><rect x="2.500" y=".5" width="7" height="5" fill="none" stroke="#7a8aa8"/><rect x=".5" y="2.500" width="7" height="5" fill="#bfdbff" stroke="#7a8aa8"/><rect x=".5" y="2.500" width="7" height="1.500" fill="#7a8aa8"/></svg>
<svg style="left:1791px;top:491.500px" width="9" height="9" viewBox="0 0 9 9"><path d="M1 1l7 7M8 1l-7 7" stroke="#7a8aa8" stroke-width="1.800"/></svg>
<div style="left:1034.7px;top:509px;width:771.8px;height:105.5px;border:1px solid #8db2e3;border-radius:3px;background:linear-gradient(#dfeaf8,#d2e1f4 40%,#c6d9f1 75%,#dae7f8)"></div>
<div style="left:1037.8px;top:512.6px;width:70.4px;height:99.6px;border:1px solid #9fbce0;border-radius:3px;background:linear-gradient(#dfeaf8 0,#d3e2f5 18%,#c8daf1 60%,#d6e5f7 81%);box-shadow:0 0 0 1px #eef5fd inset;overflow:hidden"><div style="left:0;right:0;bottom:0;height:18.500px;background:#c1d8f0"></div><div class="y ctr" style="left:0;right:18px;bottom:-1.300px;height:18.500px;color:#3e6aaa">剪贴板</div><svg style="right:4px;bottom:5px" width="8" height="8" viewBox="0 0 8 8"><path d="M1 5V1h4" stroke="#6a87b4" fill="none"/><path d="M3.500 3.500l3 3M7 4v3H4" stroke="#6a87b4" fill="none"/></svg></div>
<div style="left:1112.4px;top:512.6px;width:150.1px;height:99.6px;border:1px solid #9fbce0;border-radius:3px;background:linear-gradient(#dfeaf8 0,#d3e2f5 18%,#c8daf1 60%,#d6e5f7 81%);box-shadow:0 0 0 1px #eef5fd inset;overflow:hidden"><div style="left:0;right:0;bottom:0;height:18.500px;background:#c1d8f0"></div><div class="y ctr" style="left:0;right:18px;bottom:-1.300px;height:18.500px;color:#3e6aaa">字体</div><svg style="right:4px;bottom:5px" width="8" height="8" viewBox="0 0 8 8"><path d="M1 5V1h4" stroke="#6a87b4" fill="none"/><path d="M3.500 3.500l3 3M7 4v3H4" stroke="#6a87b4" fill="none"/></svg></div>
<div style="left:1266.7px;top:512.6px;width:110.3px;height:99.6px;border:1px solid #9fbce0;border-radius:3px;background:linear-gradient(#dfeaf8 0,#d3e2f5 18%,#c8daf1 60%,#d6e5f7 81%);box-shadow:0 0 0 1px #eef5fd inset;overflow:hidden"><div style="left:0;right:0;bottom:0;height:18.500px;background:#c1d8f0"></div><div class="y ctr" style="left:0;right:18px;bottom:-1.300px;height:18.500px;color:#3e6aaa">对齐方式</div><svg style="right:4px;bottom:5px" width="8" height="8" viewBox="0 0 8 8"><path d="M1 5V1h4" stroke="#6a87b4" fill="none"/><path d="M3.500 3.500l3 3M7 4v3H4" stroke="#6a87b4" fill="none"/></svg></div>
<div style="left:1381.6px;top:512.6px;width:86.4px;height:99.6px;border:1px solid #9fbce0;border-radius:3px;background:linear-gradient(#dfeaf8 0,#d3e2f5 18%,#c8daf1 60%,#d6e5f7 81%);box-shadow:0 0 0 1px #eef5fd inset;overflow:hidden"><div style="left:0;right:0;bottom:0;height:18.500px;background:#c1d8f0"></div><div class="y ctr" style="left:0;right:18px;bottom:-1.300px;height:18.500px;color:#3e6aaa">数字</div><svg style="right:4px;bottom:5px" width="8" height="8" viewBox="0 0 8 8"><path d="M1 5V1h4" stroke="#6a87b4" fill="none"/><path d="M3.500 3.500l3 3M7 4v3H4" stroke="#6a87b4" fill="none"/></svg></div>
<div style="left:1472.8px;top:512.6px;width:114.6px;height:99.6px;border:1px solid #9fbce0;border-radius:3px;background:linear-gradient(#dfeaf8 0,#d3e2f5 18%,#c8daf1 60%,#d6e5f7 81%);box-shadow:0 0 0 1px #eef5fd inset;overflow:hidden"><div style="left:0;right:0;bottom:0;height:18.500px;background:#c1d8f0"></div><div class="y ctr" style="left:0;right:0px;bottom:-1.300px;height:18.500px;color:#3e6aaa">样式</div></div>
<div style="left:1591.8px;top:512.6px;width:66.6px;height:99.6px;border:1px solid #9fbce0;border-radius:3px;background:linear-gradient(#dfeaf8 0,#d3e2f5 18%,#c8daf1 60%,#d6e5f7 81%);box-shadow:0 0 0 1px #eef5fd inset;overflow:hidden"><div style="left:0;right:0;bottom:0;height:18.500px;background:#c1d8f0"></div><div class="y ctr" style="left:0;right:0px;bottom:-1.300px;height:18.500px;color:#3e6aaa">单元格</div></div>
<div style="left:1662.8px;top:512.6px;width:122.6px;height:99.6px;border:1px solid #9fbce0;border-radius:3px;background:linear-gradient(#dfeaf8 0,#d3e2f5 18%,#c8daf1 60%,#d6e5f7 81%);box-shadow:0 0 0 1px #eef5fd inset;overflow:hidden"><div style="left:0;right:0;bottom:0;height:18.500px;background:#c1d8f0"></div><div class="y ctr" style="left:0;right:0px;bottom:-1.300px;height:18.500px;color:#3e6aaa">编辑</div></div>
<svg style="left:1048px;top:516px" width="30" height="33" viewBox="0 0 30 33"><rect x="1.500" y="4" width="21" height="25" rx="2" fill="#e8c070" stroke="#a87c30"/><rect x="7" y="1.500" width="10" height="5" rx="1.500" fill="#c8ccd4" stroke="#6a7078"/><path d="M12 12h15v19h-15z" fill="#fdfdff" stroke="#8a96aa"/><path d="M14.500 16h10M14.500 19h10M14.500 22h10M14.500 25h10M14.500 28h7" stroke="#a8b4c8" stroke-width=".9"/></svg>
<div class="y ctr" style="left:1041px;top:554px;width:40px;height:16px">粘贴</div><svg style="left:1058px;top:576.5px" width="6" height="4" viewBox="0 0 6 4"><polygon points="0,0 6,0 3,3.500" fill="#4a6a9c"/></svg>
<svg style="left:1088px;top:517px" width="12" height="15" viewBox="0 0 12 15"><path d="M3.500 1 L8 10M8.500 1 L4 10" stroke="#5a76b0" stroke-width="1.500"/><circle cx="3" cy="12" r="2" fill="none" stroke="#3a5aa0" stroke-width="1.400"/><circle cx="9" cy="12" r="2" fill="none" stroke="#3a5aa0" stroke-width="1.400"/></svg>
<svg style="left:1086px;top:539.500px" width="16" height="14" viewBox="0 0 16 14"><path d="M1 1h5l2 2v6.500H1z" fill="#fff" stroke="#4a6aa8" stroke-width=".9"/><path d="M2.500 4h3M2.500 6h3" stroke="#7a92c0" stroke-width=".8"/><path d="M6.500 4.500h5l2.500 2.500v6H6.500z" fill="#fff" stroke="#4a6aa8" stroke-width=".9"/><path d="M8 8h4.500M8 10h4.500M8 11.800h4.500" stroke="#5a7ab8" stroke-width=".8"/></svg>
<svg style="left:1086px;top:561px" width="16" height="15" viewBox="0 0 16 15"><path d="M10 1.500l4 3-4 4.500-3.500-2.500z" fill="#5a6a9a" stroke="#2a3a6a" stroke-width=".7"/><path d="M6.500 6.500l3.500 2.500-4 5-5-2.500z" fill="#f0d060" stroke="#a88820" stroke-width=".8"/></svg>
<div style="left:1116.6px;top:516.8px;width:94.9px;height:23.9px;background:#eaf2fb;border:1px solid #abc1de"><div class="a" style="left:2.500px;top:5px">宋体</div><svg style="left:84.5px;top:10.5px" width="6" height="4" viewBox="0 0 6 4"><polygon points="0,0 6,0 3,3.500" fill="#4a5a78"/></svg></div>
<div style="left:1211.5px;top:516.8px;width:46.8px;height:23.9px;background:#eaf2fb;border:1px solid #abc1de"><div class="a" style="left:4px;top:5.500px">12</div><svg style="left:36.5px;top:10.5px" width="6" height="4" viewBox="0 0 6 4"><polygon points="0,0 6,0 3,3.500" fill="#4a5a78"/></svg></div>
<div style="left:1117px;top:545px;width:78.3px;height:20.3px;border:1px solid #a9c0de;border-radius:3px;background:linear-gradient(#e4eefa,#d0e0f4 50%,#c3d6ee 52%,#d3e2f5);overflow:hidden"><div style="left:22.5px;top:0;width:1px;height:100%;background:#b4c8e2"></div><div style="left:45.5px;top:0;width:1px;height:100%;background:#b4c8e2"></div><div style="left:5.500px;top:1.500px;font:bold 15px 'Liberation Serif',serif;line-height:1">B</div><div style="left:30px;top:1.500px;font:italic bold 15px 'Liberation Serif',serif;line-height:1">I</div><div style="left:51px;top:1.500px;font:bold 15px 'Liberation Serif',serif;line-height:1;text-decoration:underline">U</div><svg style="left:69px;top:8.5px" width="6" height="4" viewBox="0 0 6 4"><polygon points="0,0 6,0 3,3.500" fill="#4a6a9c"/></svg></div>
<div style="left:1200px;top:545px;width:43.2px;height:20.3px;border:1px solid #a9c0de;border-radius:3px;background:linear-gradient(#e4eefa,#d0e0f4 50%,#c3d6ee 52%,#d3e2f5);overflow:hidden"><div style="left:21.5px;top:0;width:1px;height:100%;background:#b4c8e2"></div><div style="left:3.500px;top:1px;font:bold 16.500px 'Liberation Serif',serif;line-height:1">A</div><div style="left:26px;top:5px;font:bold 12.500px 'Liberation Serif',serif;line-height:1">A</div><svg style="left:15px;top:3px" width="5" height="4"><polygon points="0,3.500 5,3.500 2.500,0" fill="#3a5aa8"/></svg><svg style="left:35.500px;top:4px" width="5" height="4"><polygon points="0,0 5,0 2.500,3.500" fill="#3a5aa8"/></svg></div>
<div style="left:1117px;top:568.7px;width:33.2px;height:20.3px;border:1px solid #a9c0de;border-radius:3px;background:linear-gradient(#e4eefa,#d0e0f4 50%,#c3d6ee 52%,#d3e2f5);overflow:hidden"><svg style="left:5px;top:3px" width="14" height="14" viewBox="0 0 14 14"><path d="M1.500 1.500h11M1.500 7h11M1.500 1.500v11M7 1.500v11M12.500 1.500v11" stroke="#555" stroke-width="1" stroke-dasharray="1 1.200" fill="none"/><path d="M0.500 13h13" stroke="#000" stroke-width="1.600"/></svg><svg style="left:24.5px;top:8.5px" width="6" height="4" viewBox="0 0 6 4"><polygon points="0,0 6,0 3,3.500" fill="#4a6a9c"/></svg></div>
<div style="left:1154.4px;top:568.7px;width:66.1px;height:20.3px;border:1px solid #a9c0de;border-radius:3px;background:linear-gradient(#e4eefa,#d0e0f4 50%,#c3d6ee 52%,#d3e2f5);overflow:hidden"><div style="left:32.5px;top:0;width:1px;height:100%;background:#b4c8e2"></div><svg style="left:3.500px;top:1.500px" width="18" height="17" viewBox="0 0 18 17"><path d="M4 7l5-5 5 5-4.500 4z" fill="#f4f4f8" stroke="#3a4a6a" stroke-width=".9"/><path d="M14 7c1.500 2 2 3 1 4.500" stroke="#4a6ab8" fill="none"/><path d="M6 3.500c-1.500-2 1-3 2-1" stroke="#3a4a6a" fill="none" stroke-width=".8"/><rect x="1" y="12.500" width="15" height="3.800" fill="#ffff00"/></svg><svg style="left:23.5px;top:8.5px" width="6" height="4" viewBox="0 0 6 4"><polygon points="0,0 6,0 3,3.500" fill="#4a6a9c"/></svg><div style="left:39px;top:0px;font:bold 15.500px 'Liberation Serif',serif;line-height:1;color:#2a3a7a">A</div><div style="left:37px;top:13.500px;width:15px;height:4px;background:#e8101c"></div><svg style="left:56.5px;top:8.5px" width="6" height="4" viewBox="0 0 6 4"><polygon points="0,0 6,0 3,3.500" fill="#4a6a9c"/></svg></div>
<div style="left:1224.7px;top:568.7px;width:33.6px;height:20.3px;border:1px solid #a9c0de;border-radius:3px;background:linear-gradient(#e4eefa,#d0e0f4 50%,#c3d6ee 52%,#d3e2f5);overflow:hidden"><div style="left:4px;top:-1px;font:8px 'Liberation Sans',sans-serif;color:#2a3a8a;line-height:1">wén</div><div style="left:4.500px;top:5px;font:13px 'Liberation Sans','Noto Sans CJK SC',sans-serif;color:#2a3a8a;line-height:1">文</div><svg style="left:24.5px;top:8.5px" width="6" height="4" viewBox="0 0 6 4"><polygon points="0,0 6,0 3,3.500" fill="#4a6a9c"/></svg></div>
<div style="left:1270.3px;top:517.6px;width:68.2px;height:20.6px;border:1px solid #a9c0de;border-radius:3px;background:linear-gradient(#e4eefa,#d0e0f4 50%,#c3d6ee 52%,#d3e2f5);overflow:hidden"><div style="left:22.2px;top:0;width:1px;height:100%;background:#b4c8e2"></div><div style="left:45px;top:0;width:1px;height:100%;background:#b4c8e2"></div><div style="left:22.700px;top:0;width:22.300px;height:100%;background:linear-gradient(#fbd9a5,#fdc87a 45%,#fbb04a 52%,#fdd28a)"></div><svg style="left:3px;top:1.5px" width="16" height="14" viewBox="0 0 16 14"><rect x="2.5" y="1.5" width="11" height="1.200" fill="#222"/><rect x="2.5" y="4.1" width="11" height="1.200" fill="#222"/><rect x="2.5" y="6.7" width="11" height="1.200" fill="#222"/></svg><svg style="left:25.5px;top:3px" width="16" height="14" viewBox="0 0 16 14"><rect x="2.5" y="1.5" width="11" height="1.200" fill="#222"/><rect x="2.5" y="4.1" width="11" height="1.200" fill="#222"/><rect x="2.5" y="6.7" width="11" height="1.200" fill="#222"/></svg><svg style="left:48.5px;top:6px" width="16" height="14" viewBox="0 0 16 14"><rect x="2.5" y="1.5" width="11" height="1.200" fill="#222"/><rect x="2.5" y="4.1" width="11" height="1.200" fill="#222"/><rect x="2.5" y="6.7" width="11" height="1.200" fill="#222"/></svg></div>
<div style="left:1342.3px;top:517.6px;width:21.7px;height:20.6px;border:1px solid #c49a5a;border-radius:3px;background:linear-gradient(#fbd9a5,#fdc87a 45%,#fbb04a 52%,#fdd28a)"><svg style="left:2.500px;top:2.500px" width="16" height="15" viewBox="0 0 16 15"><rect x="1" y="1" width="11" height="3" fill="#fff" stroke="#5a6a8a" stroke-width=".8"/><rect x="1" y="6" width="8" height="3" fill="#fff" stroke="#5a6a8a" stroke-width=".8"/><rect x="1" y="11" width="8" height="3" fill="#fff" stroke="#5a6a8a" stroke-width=".8"/><path d="M13.500 2v8h-3" stroke="#3a5aa8" fill="none" stroke-width="1.200"/><polygon points="10,7.500 10,12.500 12.500,10" fill="#3a5aa8" transform="rotate(180 11.200 10)"/></svg></div>
<div style="left:1270.3px;top:543.4px;width:68.2px;height:20.2px;border:1px solid #a9c0de;border-radius:3px;background:linear-gradient(#e4eefa,#d0e0f4 50%,#c3d6ee 52%,#d3e2f5);overflow:hidden"><div style="left:22.2px;top:0;width:1px;height:100%;background:#b4c8e2"></div><div style="left:45px;top:0;width:1px;height:100%;background:#b4c8e2"></div><div style="left:0;top:0;width:22.200px;height:100%;background:linear-gradient(#fbd9a5,#fdc87a 45%,#fbb04a 52%,#fdd28a)"></div><svg style="left:3px;top:3.5px" width="16" height="14" viewBox="0 0 16 14"><rect x="1" y="1.5" width="13" height="1.200" fill="#222"/><rect x="1" y="4.1" width="9" height="1.200" fill="#222"/><rect x="1" y="6.7" width="13" height="1.200" fill="#222"/><rect x="1" y="9.3" width="9" height="1.200" fill="#222"/><rect x="1" y="11.9" width="13" height="1.200" fill="#222"/></svg><svg style="left:26px;top:3.5px" width="16" height="14" viewBox="0 0 16 14"><rect x="1.5" y="1.5" width="13" height="1.200" fill="#222"/><rect x="3.5" y="4.1" width="9" height="1.200" fill="#222"/><rect x="1.5" y="6.7" width="13" height="1.200" fill="#222"/><rect x="3.5" y="9.3" width="9" height="1.200" fill="#222"/><rect x="1.5" y="11.9" width="13" height="1.200" fill="#222"/></svg><svg style="left:49px;top:3.5px" width="16" height="14" viewBox="0 0 16 14"><rect x="2" y="1.5" width="13" height="1.200" fill="#222"/><rect x="6" y="4.1" width="9" height="1.200" fill="#222"/><rect x="2" y="6.7" width="13" height="1.200" fill="#222"/><rect x="6" y="9.3" width="9" height="1.200" fill="#222"/><rect x="2" y="11.9" width="13" height="1.200" fill="#222"/></svg></div>
<svg style="left:1344.500px;top:546px" width="17" height="14" viewBox="0 0 17 14"><rect x=".5" y=".5" width="16" height="13" fill="#fff" stroke="#6a7a9a"/><path d="M.5 4h16M.5 10h16M5.500 .5v3.500M11 .5v3.500M5.500 10v3.500M11 10v3.500" stroke="#8a9ab8" stroke-width=".8"/><text x="5.500" y="9.300" font-size="6" font-family="Liberation Sans" font-weight="bold" fill="#222">a</text><path d="M1.500 7h3M15.500 7h-3" stroke="#3a5aa8" stroke-width="1.200"/></svg><svg style="left:1364.5px;top:552.0px" width="6" height="4" viewBox="0 0 6 4"><polygon points="0,0 6,0 3,3.500" fill="#4a6a9c"/></svg>
<div style="left:1270.3px;top:567.6px;width:44.1px;height:21.0px;border:1px solid #a9c0de;border-radius:3px;background:linear-gradient(#e4eefa,#d0e0f4 50%,#c3d6ee 52%,#d3e2f5);overflow:hidden"><div style="left:21.5px;top:0;width:1px;height:100%;background:#b4c8e2"></div><svg style="left:4px;top:3.5px" width="16" height="14" viewBox="0 0 16 14"><rect x="5" y="1.5" width="10" height="1.200" fill="#222"/><rect x="8" y="4.1" width="7" height="1.200" fill="#222"/><rect x="5" y="6.7" width="10" height="1.200" fill="#222"/><rect x="8" y="9.3" width="7" height="1.200" fill="#222"/><rect x="5" y="11.9" width="10" height="1.200" fill="#222"/></svg><svg style="left:26px;top:3.5px" width="16" height="14" viewBox="0 0 16 14"><rect x="5" y="1.5" width="10" height="1.200" fill="#222"/><rect x="8" y="4.1" width="7" height="1.200" fill="#222"/><rect x="5" y="6.7" width="10" height="1.200" fill="#222"/><rect x="8" y="9.3" width="7" height="1.200" fill="#222"/><rect x="5" y="11.9" width="10" height="1.200" fill="#222"/></svg><svg style="left:1.500px;top:7px" width="6" height="6"><polygon points="5.500,0 5.500,6 0,3" fill="#3a6ad0"/></svg><svg style="left:23.500px;top:7px" width="6" height="6"><polygon points="0,0 0,6 5.500,3" fill="#3a6ad0"/></svg></div>
<div style="left:1318.2px;top:567.6px;width:31.1px;height:21.0px;border:1px solid #a9c0de;border-radius:3px;background:linear-gradient(#e4eefa,#d0e0f4 50%,#c3d6ee 52%,#d3e2f5);overflow:hidden"><svg style="left:3px;top:2.500px" width="16" height="15" viewBox="0 0 16 15"><text x="1" y="10" font-size="9" font-family="Liberation Sans" font-weight="bold" fill="#222" transform="rotate(-35 6 9)">ab</text><path d="M5 13.500l8-6" stroke="#3a5aa8" stroke-width="1.200"/><polygon points="14.500,6.500 10.500,7 13,10" fill="#3a5aa8"/></svg><svg style="left:22px;top:9.0px" width="6" height="4" viewBox="0 0 6 4"><polygon points="0,0 6,0 3,3.500" fill="#4a6a9c"/></svg></div>
<div style="left:1385.4px;top:516.8px;width:79.2px;height:24.4px;background:#eaf2fb;border:1px solid #abc1de"><div class="a" style="left:3px;top:5.500px">常规</div><svg style="left:69px;top:10.5px" width="6" height="4" viewBox="0 0 6 4"><polygon points="0,0 6,0 3,3.500" fill="#4a5a78"/></svg></div>
<div style="left:1385.4px;top:544.8px;width:79.2px;height:20.5px;border:1px solid #a9c0de;border-radius:3px;background:linear-gradient(#e4eefa,#d0e0f4 50%,#c3d6ee 52%,#d3e2f5);overflow:hidden"><div style="left:33px;top:0;width:1px;height:100%;background:#b4c8e2"></div><div style="left:56.5px;top:0;width:1px;height:100%;background:#b4c8e2"></div><svg style="left:3px;top:2px" width="18" height="16" viewBox="0 0 18 16"><rect x="1" y="1" width="14" height="8" rx="1" fill="#5a86d8" stroke="#2a4a98" stroke-width=".8"/><ellipse cx="8" cy="5" rx="2.500" ry="2.800" fill="#cfe0fa"/><ellipse cx="11" cy="10" rx="4.500" ry="1.600" fill="#f0c040" stroke="#a87818" stroke-width=".6"/><ellipse cx="11" cy="12.300" rx="4.500" ry="1.600" fill="#f0c040" stroke="#a87818" stroke-width=".6"/><ellipse cx="11" cy="14.300" rx="4.500" ry="1.600" fill="#f0c040" stroke="#a87818" stroke-width=".6"/></svg><svg style="left:23.5px;top:8.5px" width="6" height="4" viewBox="0 0 6 4"><polygon points="0,0 6,0 3,3.500" fill="#4a6a9c"/></svg><div style="left:38px;top:2.500px;font:14px 'Liberation Sans',sans-serif;line-height:1;color:#222">%</div><div style="left:64px;top:-2.500px;font:bold 18px 'Liberation Serif',serif;line-height:1;color:#222">,</div></div>
<div style="left:1385.4px;top:569px;width:43.9px;height:20.5px;border:1px solid #a9c0de;border-radius:3px;background:linear-gradient(#e4eefa,#d0e0f4 50%,#c3d6ee 52%,#d3e2f5);overflow:hidden"><div style="left:21.5px;top:0;width:1px;height:100%;background:#b4c8e2"></div><div style="left:3px;top:1px;font:bold 9px 'Liberation Sans',sans-serif;line-height:.95;color:#222;white-space:pre;letter-spacing:-.3px"><span class="i" style="color:#2a5ad0">←</span>.0
.00</div><div style="left:24px;top:1px;font:bold 9px 'Liberation Sans',sans-serif;line-height:.95;color:#222;white-space:pre;letter-spacing:-.3px">.00
<span class="i" style="color:#2a5ad0">→</span>.0</div></div>
<svg style="left:1479.4px;top:516.5px" width="17" height="16" viewBox="0 0 17 16"><rect x=".5" y=".5" width="14" height="12" fill="#fff" stroke="#6a7a9a" stroke-width=".9"/><path d="M.5 4h14M.5 8h14M5 .5v12M10 .5v12" stroke="#8a9ab8" stroke-width=".8"/><rect x="1" y="1" width="4" height="3" fill="#d83838"/><rect x="5.500" y="4.500" width="4" height="3" fill="#4a78d8"/><rect x="8" y="8" width="8" height="7" fill="#fff" stroke="#444" stroke-width=".8"/><text x="9" y="14" font-size="6" font-family="Liberation Sans" font-weight="bold" fill="#222">≤</text></svg><div class="y" style="left:1498.100px;top:519.5px">条件格式</div><svg style="left:1550.6px;top:523.0px" width="6" height="4" viewBox="0 0 6 4"><polygon points="0,0 6,0 3,3.500" fill="#4a6a9c"/></svg>
<svg style="left:1479.4px;top:538.55px" width="17" height="16" viewBox="0 0 17 16"><rect x=".5" y=".5" width="14" height="12" fill="#fff" stroke="#6a7a9a" stroke-width=".9"/><path d="M.5 4h14M.5 8h14M5 .5v12M10 .5v12" stroke="#8a9ab8" stroke-width=".8"/><rect x="1" y="1" width="13" height="3" fill="#4a5a88"/><path d="M7 13l7-8 2 2-7 8z" fill="#f0d060" stroke="#6a5a18" stroke-width=".7"/></svg><div class="y" style="left:1498.100px;top:541.55px">套用表格格式</div><svg style="left:1574.8999999999999px;top:545.05px" width="6" height="4" viewBox="0 0 6 4"><polygon points="0,0 6,0 3,3.500" fill="#4a6a9c"/></svg>
<svg style="left:1479.4px;top:560.6px" width="17" height="16" viewBox="0 0 17 16"><rect x=".5" y=".5" width="14" height="12" fill="#fff" stroke="#6a7a9a" stroke-width=".9"/><path d="M.5 4h14M.5 8h14M5 .5v12M10 .5v12" stroke="#8a9ab8" stroke-width=".8"/><rect x="1" y="1" width="13" height="3" fill="#7a9ad8"/><path d="M7 13l7-6 2 2-7 6z" fill="#f0d060" stroke="#6a5a18" stroke-width=".7"/></svg><div class="y" style="left:1498.100px;top:563.6px">单元格样式</div><svg style="left:1562.6999999999998px;top:567.1px" width="6" height="4" viewBox="0 0 6 4"><polygon points="0,0 6,0 3,3.500" fill="#4a6a9c"/></svg>
<svg style="left:1597.8px;top:516.5px" width="17" height="16" viewBox="0 0 17 16"><rect x=".5" y="1.500" width="5" height="4" fill="#fff" stroke="#6a7a9a" stroke-width=".8"/><rect x=".5" y="9.500" width="5" height="4" fill="#fff" stroke="#6a7a9a" stroke-width=".8"/><rect x="10" y="5.500" width="6" height="3.500" fill="#fff" stroke="#6a7a9a" stroke-width=".8"/><path d="M9 7.500H6" stroke="#222" stroke-width="1.200"/><polygon points="5,7.500 7.500,5.800 7.500,9.200" fill="#222"/></svg><div class="y" style="left:1617.200px;top:519.5px">插入</div><svg style="left:1645.5px;top:523.0px" width="6" height="4" viewBox="0 0 6 4"><polygon points="0,0 6,0 3,3.500" fill="#4a6a9c"/></svg>
<svg style="left:1597.8px;top:538.55px" width="17" height="16" viewBox="0 0 17 16"><rect x=".5" y="1.500" width="5" height="4" fill="#fff" stroke="#6a7a9a" stroke-width=".8"/><rect x=".5" y="9.500" width="5" height="4" fill="#fff" stroke="#6a7a9a" stroke-width=".8"/><path d="M6 7.500h3" stroke="#222" stroke-width="1.200"/><path d="M9.500 2.500l6 6M15.500 2.500l-6 6" stroke="#e03020" stroke-width="2"/></svg><div class="y" style="left:1617.200px;top:541.55px">删除</div><svg style="left:1645.5px;top:545.05px" width="6" height="4" viewBox="0 0 6 4"><polygon points="0,0 6,0 3,3.500" fill="#4a6a9c"/></svg>
<svg style="left:1597.8px;top:560.6px" width="17" height="16" viewBox="0 0 17 16"><rect x=".5" y="2.500" width="15" height="12" fill="#fff" stroke="#4a5a7a" stroke-width=".9"/><path d="M.5 6h15M.5 10h15M5.500 2.500v12M10.500 2.500v12" stroke="#6a7a9a" stroke-width=".8"/><rect x="5.500" y="6" width="5" height="4" fill="#8aa8f0"/><path d="M2 .5v2M6 .5v2M10 .5v2M14 .5v2" stroke="#4a5a7a"/></svg><div class="y" style="left:1617.200px;top:563.6px">格式</div><svg style="left:1645.5px;top:567.1px" width="6" height="4" viewBox="0 0 6 4"><polygon points="0,0 6,0 3,3.500" fill="#4a6a9c"/></svg>
<div style="left:1670.500px;top:516px;font:bold 17px 'Liberation Sans',sans-serif;line-height:1;color:#111">Σ</div><svg style="left:1688px;top:523.0px" width="6" height="4" viewBox="0 0 6 4"><polygon points="0,0 6,0 3,3.500" fill="#4a6a9c"/></svg>
<svg style="left:1670px;top:538.500px" width="14" height="16" viewBox="0 0 14 16"><rect x=".5" y=".5" width="13" height="15" fill="#fff" stroke="#4a6ab0"/><rect x="1" y="1" width="12" height="3" fill="#7a9ae0"/><path d="M7 5.500v5" stroke="#2a5ad0" stroke-width="3"/><polygon points="2.500,9.500 11.500,9.500 7,14.500" fill="#2a5ad0"/></svg><svg style="left:1686.5px;top:545.1px" width="6" height="4" viewBox="0 0 6 4"><polygon points="0,0 6,0 3,3.500" fill="#4a6a9c"/></svg>
<svg style="left:1670px;top:562px" width="15" height="13" viewBox="0 0 15 13"><path d="M1 8.500l7-7 5 3.500-7 7h-3z" fill="#f8f8fc" stroke="#4a5a7a" stroke-width=".9"/><path d="M1 8.500l2.500 3.500h3l-3.500-5.500z" fill="#c8d0e0" stroke="#4a5a7a" stroke-width=".6"/><path d="M3 12.500h10" stroke="#222"/></svg><svg style="left:1686.5px;top:567.1px" width="6" height="4" viewBox="0 0 6 4"><polygon points="0,0 6,0 3,3.500" fill="#4a6a9c"/></svg>
<svg style="left:1702px;top:517px" width="32" height="31" viewBox="0 0 32 31"><text x="1" y="13" font-size="16" font-weight="bold" font-family="Liberation Serif" fill="#3a5ac0">A</text><text x="1" y="28" font-size="17" font-weight="bold" font-family="Liberation Serif" fill="#c83030">Z</text><path d="M11 5h19l-7 8.500v11l-5-3.500v-7.500z" fill="#c4ccd8" stroke="#8a94a8" stroke-width=".8"/></svg>
<div class="y ctr" style="left:1697.500px;top:554px;width:40px;height:16px">排序和</div><div class="y" style="left:1702px;top:572px">筛选</div><svg style="left:1729.5px;top:575.9px" width="6" height="4" viewBox="0 0 6 4"><polygon points="0,0 6,0 3,3.500" fill="#4a6a9c"/></svg>
<svg style="left:1744px;top:518px" width="30" height="28" viewBox="0 0 30 28"><defs><linearGradient id="bn" x1="0" x2="1"><stop offset="0" stop-color="#5a7ac0"/><stop offset=".5" stop-color="#c8d8f4"/><stop offset="1" stop-color="#4a68b0"/></linearGradient></defs><rect x="5" y="1" width="6" height="6" rx="1.500" fill="url(#bn)" stroke="#2a3a70" stroke-width=".7"/><rect x="18" y="1" width="6" height="6" rx="1.500" fill="url(#bn)" stroke="#2a3a70" stroke-width=".7"/><path d="M3 24v-12l2.500-5h5l2.500 5v12z" fill="url(#bn)" stroke="#2a3a70" stroke-width=".7"/><path d="M16 24v-12l2.500-5h5l2.500 5v12z" fill="url(#bn)" stroke="#2a3a70" stroke-width=".7"/><rect x="12" y="10" width="5" height="5" fill="#4a62a8"/><rect x="2.500" y="20" width="11" height="4" rx="1" fill="#3a4a88"/><rect x="15.500" y="20" width="11" height="4" rx="1" fill="#3a4a88"/></svg>
<div class="y ctr" style="left:1739.800px;top:554px;width:40px;height:16px">查找和</div><div class="y" style="left:1744.500px;top:572px">选择</div><svg style="left:1772px;top:575.9px" width="6" height="4" viewBox="0 0 6 4"><polygon points="0,0 6,0 3,3.500" fill="#4a6a9c"/></svg>
<div style="left:1034.7px;top:614.5px;width:771.8px;height:27.0px;background:#bfdbff"></div>
<div style="left:1034.7px;top:619px;width:156.3px;height:18.2px;background:#fff;border-top:1px solid #9fb8da;border-bottom:1px solid #9fb8da"><div class="c" style="left:57px;top:2px;font-size:15px;color:#111">B23</div><svg style="left:145.500px;top:7px" width="8" height="5"><polygon points="0,0 8,0 4,4.500" fill="#111"/></svg></div>
<div style="left:1194.3px;top:618.5px;width:76.7px;height:19.2px;border-radius:10px 0 0 10px;border:1px solid #9fb8da;background:linear-gradient(#e8f1fc,#cfdff4 50%,#bfd2ec);border-right:none"><div style="left:5px;top:5px;width:6px;height:6px;border-radius:3px;background:#b8c2d0;box-shadow:0 0 1px #fff"></div><div style="left:58px;top:0.500px;font:italic bold 15px 'Liberation Serif',serif;color:#3a3a3a;line-height:1">f<span class="i" style="font-size:10px">x</span></div></div>
<div style="left:1270.5px;top:619px;width:519.9px;height:18.2px;background:#fff;border:1px solid #9fb8da"><div class="c" style="left:10.500px;top:1.500px;font-size:15px;color:#111">-1</div></div>
<div style="left:1790.4px;top:619px;width:15.6px;height:18.2px;background:linear-gradient(#e4eefb,#c8daf2);border:1px solid #9fb8da"><svg style="left:3.500px;top:3.500px" width="8" height="10" viewBox="0 0 8 10"><path d="M1 1l3 3 3-3M1 5l3 3 3-3" stroke="#111" stroke-width="1.400" fill="none"/></svg></div>
<div style="left:1034.7px;top:641.5px;width:771.8px;height:384.5px;background:#fff"></div>
<div style="left:1034.7px;top:641.5px;width:755.7px;height:19.0px;background:linear-gradient(#f4f8fd,#e2ebf6 50%,#d3dff0);border-bottom:1px solid #9eb6ce"></div>
<div style="left:1034.7px;top:641.5px;width:32.5px;height:19.0px;background:linear-gradient(#c4d6ee,#b0c8e8);border-right:1px solid #9eb6ce;border-bottom:1px solid #9eb6ce"><svg style="left:18px;top:5.500px" width="11" height="11"><polygon points="10.500,0 10.500,10.500 0,10.500" fill="#e8f0fa"/></svg></div>
<div class="ctr" style="left:1067.2px;top:641.5px;width:148.8px;height:19.0px;border-right:1px solid #9eb6ce"><div class="c" style="font-size:15px;color:#222">A</div></div>
<div style="left:1216px;top:641.5px;width:549px;height:19.0px;background:linear-gradient(#f9d9a6,#f6c57f 50%,#f0b25c);border-bottom:1px solid #c28a30;border-right:1px solid #9eb6ce"><div class="c" style="font-size:15px;color:#222;left:269px;top:2.500px">B</div></div>
<div style="left:1765px;top:641.5px;width:25.4px;height:19.0px;"></div>
<div style="left:1034.7px;top:661.2px;width:32.5px;height:18.9px;background:linear-gradient(90deg,#e9eff8,#dbe5f3);border-bottom:1px solid #9eb6ce;border-right:1px solid #9eb6ce"><div class="c" style="font-size:16px;color:#2a2a2a;top:3px;left:9px;letter-spacing:0.500px">19</div></div>
<div style="left:1067.2px;top:679.4px;width:697.8px;height:1.2px;background:#000"></div>
<div style="left:1765px;top:679.6px;width:25.4px;height:1.0px;background:#d0d7e5"></div>
<div class="c" style="left:1069.500px;top:664.7px">快捷标记</div><div class="c" style="left:1219.500px;top:664.7px">不加</div>
<div style="left:1034.7px;top:680.1px;width:32.5px;height:18.9px;background:linear-gradient(90deg,#e9eff8,#dbe5f3);border-bottom:1px solid #9eb6ce;border-right:1px solid #9eb6ce"><div class="c" style="font-size:16px;color:#2a2a2a;top:3px;left:9px;letter-spacing:0.500px">20</div></div>
<div style="left:1067.2px;top:698.4px;width:697.8px;height:1.2px;background:#000"></div>
<div style="left:1765px;top:698.6px;width:25.4px;height:1.0px;background:#d0d7e5"></div>
<div class="c" style="left:1069.500px;top:683.6px">客户标记</div><div class="c" style="left:1219.500px;top:683.6px">不加</div>
<div style="left:1034.7px;top:699.1px;width:32.5px;height:18.9px;background:linear-gradient(90deg,#e9eff8,#dbe5f3);border-bottom:1px solid #9eb6ce;border-right:1px solid #9eb6ce"><div class="c" style="font-size:16px;color:#2a2a2a;top:3px;left:9px;letter-spacing:0.500px">21</div></div>
<div style="left:1216px;top:699.1px;width:549px;height:18.9px;background:#ffff00"></div>
<div style="left:1067.2px;top:717.3px;width:697.8px;height:1.2px;background:#000"></div>
<div style="left:1765px;top:717.5px;width:25.4px;height:1.0px;background:#d0d7e5"></div>
<div class="c" style="left:1069.500px;top:702.6px">周期标记</div><div class="c" style="left:1219.500px;top:702.6px">加</div>
<div style="left:1034.7px;top:718.0px;width:32.5px;height:18.9px;background:linear-gradient(90deg,#e9eff8,#dbe5f3);border-bottom:1px solid #9eb6ce;border-right:1px solid #9eb6ce"><div class="c" style="font-size:16px;color:#2a2a2a;top:3px;left:9px;letter-spacing:0.500px">22</div></div>
<div style="left:1067.2px;top:736.3px;width:697.8px;height:1.2px;background:#000"></div>
<div style="left:1765px;top:736.5px;width:25.4px;height:1.0px;background:#d0d7e5"></div>
<div class="c" style="left:1069.500px;top:721.5px">板厚<span class="i" style="letter-spacing:.75px">(</span>㎜<span class="i" style="letter-spacing:.75px">)</span></div><div class="c" style="left:1219.500px;top:721.5px"><span class="i" style="letter-spacing:.75px">1.6</span></div>
<div style="left:1034.7px;top:737.0px;width:32.5px;height:18.9px;background:linear-gradient(90deg,#f9d49a,#f2b866);border-bottom:1px solid #9eb6ce;border-right:1px solid #9eb6ce"><div class="c" style="font-size:16px;color:#2a2a2a;top:3px;left:9px;letter-spacing:0.500px">23</div></div>
<div style="left:1216px;top:737.0px;width:549px;height:18.9px;background:#ffff00"></div>
<div style="left:1067.2px;top:755.2px;width:697.8px;height:1.2px;background:#000"></div>
<div style="left:1765px;top:755.4px;width:25.4px;height:1.0px;background:#d0d7e5"></div>
<div class="c" style="left:1069.500px;top:740.5px">铜箔厚度<span class="i" style="letter-spacing:.75px">(OZ)</span></div><div class="c" style="left:1219.500px;top:740.5px"><span class="i" style="letter-spacing:.75px">-1</span></div>
<div style="left:1034.7px;top:755.9px;width:32.5px;height:18.9px;background:linear-gradient(90deg,#e9eff8,#dbe5f3);border-bottom:1px solid #9eb6ce;border-right:1px solid #9eb6ce"><div class="c" style="font-size:16px;color:#2a2a2a;top:3px;left:9px;letter-spacing:0.500px">24</div></div>
<div style="left:1216px;top:755.9px;width:549px;height:18.9px;background:#ffff00"></div>
<div style="left:1067.2px;top:774.2px;width:697.8px;height:1.2px;background:#000"></div>
<div style="left:1765px;top:774.4px;width:25.4px;height:1.0px;background:#d0d7e5"></div>
<div class="c" style="left:1069.500px;top:759.4px">成品尺寸长<span class="i" style="letter-spacing:.75px">(</span>㎜<span class="i" style="letter-spacing:.75px">)</span></div><div class="c" style="left:1219.500px;top:759.4px"><span class="i" style="letter-spacing:.75px">179.2</span></div>
<div style="left:1034.7px;top:774.9px;width:32.5px;height:18.9px;background:linear-gradient(90deg,#e9eff8,#dbe5f3);border-bottom:1px solid #9eb6ce;border-right:1px solid #9eb6ce"><div class="c" style="font-size:16px;color:#2a2a2a;top:3px;left:9px;letter-spacing:0.500px">25</div></div>
<div style="left:1216px;top:774.9px;width:549px;height:18.9px;background:#ffff00"></div>
<div style="left:1067.2px;top:793.1px;width:697.8px;height:1.2px;background:#000"></div>
<div style="left:1765px;top:793.3px;width:25.4px;height:1.0px;background:#d0d7e5"></div>
<div class="c" style="left:1069.500px;top:778.4px">成品尺寸宽<span class="i" style="letter-spacing:.75px">(</span>㎜<span class="i" style="letter-spacing:.75px">)</span></div><div class="c" style="left:1219.500px;top:778.4px"><span class="i" style="letter-spacing:.75px">115.2</span></div>
<div style="left:1034.7px;top:793.8px;width:32.5px;height:18.9px;background:linear-gradient(90deg,#e9eff8,#dbe5f3);border-bottom:1px solid #9eb6ce;border-right:1px solid #9eb6ce"><div class="c" style="font-size:16px;color:#2a2a2a;top:3px;left:9px;letter-spacing:0.500px">26</div></div>
<div style="left:1067.2px;top:812.1px;width:697.8px;height:1.2px;background:#000"></div>
<div style="left:1765px;top:812.3px;width:25.4px;height:1.0px;background:#d0d7e5"></div>
<div class="c" style="left:1069.500px;top:797.3px">拼板数<span class="i" style="letter-spacing:.75px">su</span></div><div class="c" style="left:1219.500px;top:797.3px"><span class="i" style="letter-spacing:.75px">6</span></div>
<div style="left:1034.7px;top:812.8px;width:32.5px;height:18.9px;background:linear-gradient(90deg,#e9eff8,#dbe5f3);border-bottom:1px solid #9eb6ce;border-right:1px solid #9eb6ce"><div class="c" style="font-size:16px;color:#2a2a2a;top:3px;left:9px;letter-spacing:0.500px">27</div></div>
<div style="left:1067.2px;top:831.0px;width:697.8px;height:1.2px;background:#000"></div>
<div style="left:1765px;top:831.2px;width:25.4px;height:1.0px;background:#d0d7e5"></div>
<div class="c" style="left:1069.500px;top:816.3px">板材</div><div class="c" style="left:1219.500px;top:816.3px"><span class="i" style="letter-spacing:.75px">IT-158</span></div>
<div style="left:1034.7px;top:831.7px;width:32.5px;height:18.9px;background:linear-gradient(90deg,#e9eff8,#dbe5f3);border-bottom:1px solid #9eb6ce;border-right:1px solid #9eb6ce"><div class="c" style="font-size:16px;color:#2a2a2a;top:3px;left:9px;letter-spacing:0.500px">28</div></div>
<div style="left:1067.2px;top:850.0px;width:697.8px;height:1.2px;background:#000"></div>
<div style="left:1765px;top:850.2px;width:25.4px;height:1.0px;background:#d0d7e5"></div>
<div class="c" style="left:1069.500px;top:835.2px">测试</div><div class="c" style="left:1219.500px;top:835.2px">飞针测试</div>
<div style="left:1034.7px;top:850.7px;width:32.5px;height:18.9px;background:linear-gradient(90deg,#e9eff8,#dbe5f3);border-bottom:1px solid #9eb6ce;border-right:1px solid #9eb6ce"><div class="c" style="font-size:16px;color:#2a2a2a;top:3px;left:9px;letter-spacing:0.500px">29</div></div>
<div style="left:1067.2px;top:868.9px;width:697.8px;height:1.2px;background:#000"></div>
<div style="left:1765px;top:869.1px;width:25.4px;height:1.0px;background:#d0d7e5"></div>
<div class="c" style="left:1069.500px;top:854.2px">成品板厚公差<span class="i" style="letter-spacing:.75px">(</span>㎜<span class="i" style="letter-spacing:.75px">)</span></div><div class="c" style="left:1219.500px;top:854.2px"><span class="i" style="letter-spacing:.75px">(+/-10%)</span></div>
<div style="left:1034.7px;top:869.6px;width:32.5px;height:18.9px;background:linear-gradient(90deg,#e9eff8,#dbe5f3);border-bottom:1px solid #9eb6ce;border-right:1px solid #9eb6ce"><div class="c" style="font-size:16px;color:#2a2a2a;top:3px;left:9px;letter-spacing:0.500px">30</div></div>
<div style="left:1216px;top:869.6px;width:549px;height:18.9px;background:#ffff00"></div>
<div style="left:1067.2px;top:887.9px;width:697.8px;height:1.2px;background:#000"></div>
<div style="left:1765px;top:888.1px;width:25.4px;height:1.0px;background:#d0d7e5"></div>
<div class="c" style="left:1069.500px;top:873.1px">成品尺寸长宽公差</div><div class="c" style="left:1219.500px;top:873.1px"><span class="i" style="letter-spacing:.75px">(+/-0.15</span>㎜<span class="i" style="letter-spacing:.75px">)</span></div>
<div style="left:1034.7px;top:888.6px;width:32.5px;height:18.9px;background:linear-gradient(90deg,#e9eff8,#dbe5f3);border-bottom:1px solid #9eb6ce;border-right:1px solid #9eb6ce"><div class="c" style="font-size:16px;color:#2a2a2a;top:3px;left:9px;letter-spacing:0.500px">31</div></div>
<div style="left:1067.2px;top:906.8px;width:697.8px;height:1.2px;background:#000"></div>
<div style="left:1765px;top:907.0px;width:25.4px;height:1.0px;background:#d0d7e5"></div>
<div class="c" style="left:1069.500px;top:892.1px">过孔工艺</div><div class="c" style="left:1219.500px;top:892.1px">阻焊覆盖</div>
<div style="left:1034.7px;top:907.5px;width:32.5px;height:18.9px;background:linear-gradient(90deg,#e9eff8,#dbe5f3);border-bottom:1px solid #9eb6ce;border-right:1px solid #9eb6ce"><div class="c" style="font-size:16px;color:#2a2a2a;top:3px;left:9px;letter-spacing:0.500px">32</div></div>
<div style="left:1067.2px;top:925.8px;width:697.8px;height:1.2px;background:#000"></div>
<div style="left:1765px;top:926.0px;width:25.4px;height:1.0px;background:#d0d7e5"></div>
<div class="c" style="left:1069.500px;top:911.0px">外形要求</div><div class="c" style="left:1219.500px;top:911.0px"><span class="i" style="letter-spacing:.75px">(6</span>拼板<span class="i" style="letter-spacing:.75px">V-CUT</span>交货<span class="i" style="letter-spacing:.75px">)</span>【顺拼】</div>
<div style="left:1034.7px;top:926.5px;width:32.5px;height:18.9px;background:linear-gradient(90deg,#e9eff8,#dbe5f3);border-bottom:1px solid #9eb6ce;border-right:1px solid #9eb6ce"><div class="c" style="font-size:16px;color:#2a2a2a;top:3px;left:9px;letter-spacing:0.500px">33</div></div>
<div style="left:1216px;top:926.5px;width:549px;height:18.9px;background:#ffff00"></div>
<div style="left:1067.2px;top:944.7px;width:697.8px;height:1.2px;background:#000"></div>
<div style="left:1765px;top:944.9px;width:25.4px;height:1.0px;background:#d0d7e5"></div>
<div class="c" style="left:1069.500px;top:930.0px">字符</div><div class="c" style="left:1219.500px;top:930.0px">白色字符</div>
<div style="left:1034.7px;top:945.4px;width:32.5px;height:18.9px;background:linear-gradient(90deg,#e9eff8,#dbe5f3);border-bottom:1px solid #9eb6ce;border-right:1px solid #9eb6ce"><div class="c" style="font-size:16px;color:#2a2a2a;top:3px;left:9px;letter-spacing:0.500px">34</div></div>
<div style="left:1216px;top:945.4px;width:549px;height:18.9px;background:#ffff00"></div>
<div style="left:1067.2px;top:963.7px;width:697.8px;height:1.2px;background:#000"></div>
<div style="left:1765px;top:963.9px;width:25.4px;height:1.0px;background:#d0d7e5"></div>
<div class="c" style="left:1069.500px;top:948.9px">阻焊</div><div class="c" style="left:1219.500px;top:948.9px">黑色</div>
<div style="left:1034.7px;top:964.4px;width:32.5px;height:18.9px;background:linear-gradient(90deg,#e9eff8,#dbe5f3);border-bottom:1px solid #9eb6ce;border-right:1px solid #9eb6ce"><div class="c" style="font-size:16px;color:#2a2a2a;top:3px;left:9px;letter-spacing:0.500px">35</div></div>
<div style="left:1067.2px;top:982.6px;width:697.8px;height:1.2px;background:#000"></div>
<div style="left:1765px;top:982.8px;width:25.4px;height:1.0px;background:#d0d7e5"></div>
<div class="c" style="left:1069.500px;top:967.9px">最小线宽</div><div class="c" style="left:1219.500px;top:967.9px"><span class="i" style="letter-spacing:.75px">10</span></div>
<div style="left:1034.7px;top:983.3px;width:32.5px;height:18.9px;background:linear-gradient(90deg,#e9eff8,#dbe5f3);border-bottom:1px solid #9eb6ce;border-right:1px solid #9eb6ce"><div class="c" style="font-size:16px;color:#2a2a2a;top:3px;left:9px;letter-spacing:0.500px">36</div></div>
<div style="left:1067.2px;top:1001.5px;width:697.8px;height:1.2px;background:#000"></div>
<div style="left:1765px;top:1001.7px;width:25.4px;height:1.0px;background:#d0d7e5"></div>
<div class="c" style="left:1069.500px;top:986.8px">最小线距</div><div class="c" style="left:1219.500px;top:986.8px"><span class="i" style="letter-spacing:.75px">6</span></div>
<div style="left:1034.7px;top:1002.2px;width:32.5px;height:18.9px;background:linear-gradient(90deg,#e9eff8,#dbe5f3);border-bottom:1px solid #9eb6ce;border-right:1px solid #9eb6ce"><div class="c" style="font-size:16px;color:#2a2a2a;top:3px;left:9px;letter-spacing:0.500px">37</div></div>
<div style="left:1067.2px;top:1020.5px;width:697.8px;height:1.2px;background:#000"></div>
<div style="left:1765px;top:1020.7px;width:25.4px;height:1.0px;background:#d0d7e5"></div>
<div class="c" style="left:1069.500px;top:1005.7px">合拼板数</div><div class="c" style="left:1219.500px;top:1005.7px"><span class="i" style="letter-spacing:.75px">1</span>种相同</div>
<div style="left:1066.5px;top:660.5px;width:1.2px;height:365.5px;background:#000"></div>
<div style="left:1215px;top:660.5px;width:2.2px;height:365.5px;background:#000"></div>
<div style="left:1764px;top:660.5px;width:2px;height:365.5px;background:#000"></div>
<div style="left:1216.2px;top:735.5px;width:550.0px;height:21.6px;border:2px solid #000;box-shadow:0 0 0 1px #fff inset"></div>
<div style="left:1763px;top:753.4px;width:5px;height:5.0px;background:#000;border:1px solid #fff"></div>
<div style="left:1058.4px;top:735.6px;width:299.2px;height:21.2px;border:2px solid #f63cf0;box-shadow:1.500px 1.500px 2.500px #00000070"></div>
<div style="left:1057.8px;top:945px;width:301.2px;height:23px;border:2px solid #f63cf0;box-shadow:1.500px 1.500px 2.500px #00000070"></div>
<div style="left:1790.4px;top:641.5px;width:16.1px;height:384.5px;background:linear-gradient(90deg,#c3d4ec,#a9c0e2 40%,#9cb6dc);border-left:1px solid #8fa8cc"></div>
<div style="left:1791.5px;top:642px;width:14.5px;height:10.5px;background:linear-gradient(#f4f8fd,#d8e4f4);border:1px solid #8fa8cc"><div style="left:3px;top:3.500px;width:8px;height:2px;background:#fff;border:0.500px solid #8a9ab8"></div></div>
<svg style="left:1794px;top:656.500px" width="10" height="6"><polygon points="0,5.500 10,5.500 5,0" fill="#6a84b4"/></svg>
<div style="left:1791.5px;top:766.5px;width:14.3px;height:162.9px;border:1px solid #7f98c0;border-radius:2px;background:linear-gradient(90deg,#f4f7fc,#dfe8f5 50%,#cbd9ee)"><div style="left:3px;top:76px;width:7px;height:7px;border-top:1px solid #6a80a8;border-bottom:1px solid #6a80a8"><div style="left:0;top:2px;width:7px;height:1px;background:#6a80a8"></div></div></div>
<svg style="left:1035px;top:459px" width="41" height="41" viewBox="0 0 41 41"><defs><radialGradient id="ob" cx="50%" cy="30%" r="75%"><stop offset="0" stop-color="#fff6d8"/><stop offset=".45" stop-color="#f0c878"/><stop offset=".8" stop-color="#d89838"/><stop offset="1" stop-color="#b87820"/></radialGradient></defs><circle cx="20.300" cy="20.400" r="18.500" fill="url(#ob)" stroke="#a88040" stroke-width="1"/><circle cx="20.300" cy="20.400" r="17.300" fill="none" stroke="#fff4d0" stroke-width=".8" opacity=".8"/><rect x="11" y="12" width="9" height="9" rx="1.500" fill="none" stroke="#e04818" stroke-width="2.400"/><rect x="21.500" y="13.500" width="7.500" height="7.500" rx="1.500" fill="none" stroke="#3a8ad0" stroke-width="2.200"/><rect x="13" y="22.500" width="7.500" height="7.500" rx="1.500" fill="none" stroke="#e8b020" stroke-width="2.200"/><rect x="21.500" y="22" width="9" height="9" rx="1.500" fill="none" stroke="#58a030" stroke-width="2.400"/></svg>
</body></html>
